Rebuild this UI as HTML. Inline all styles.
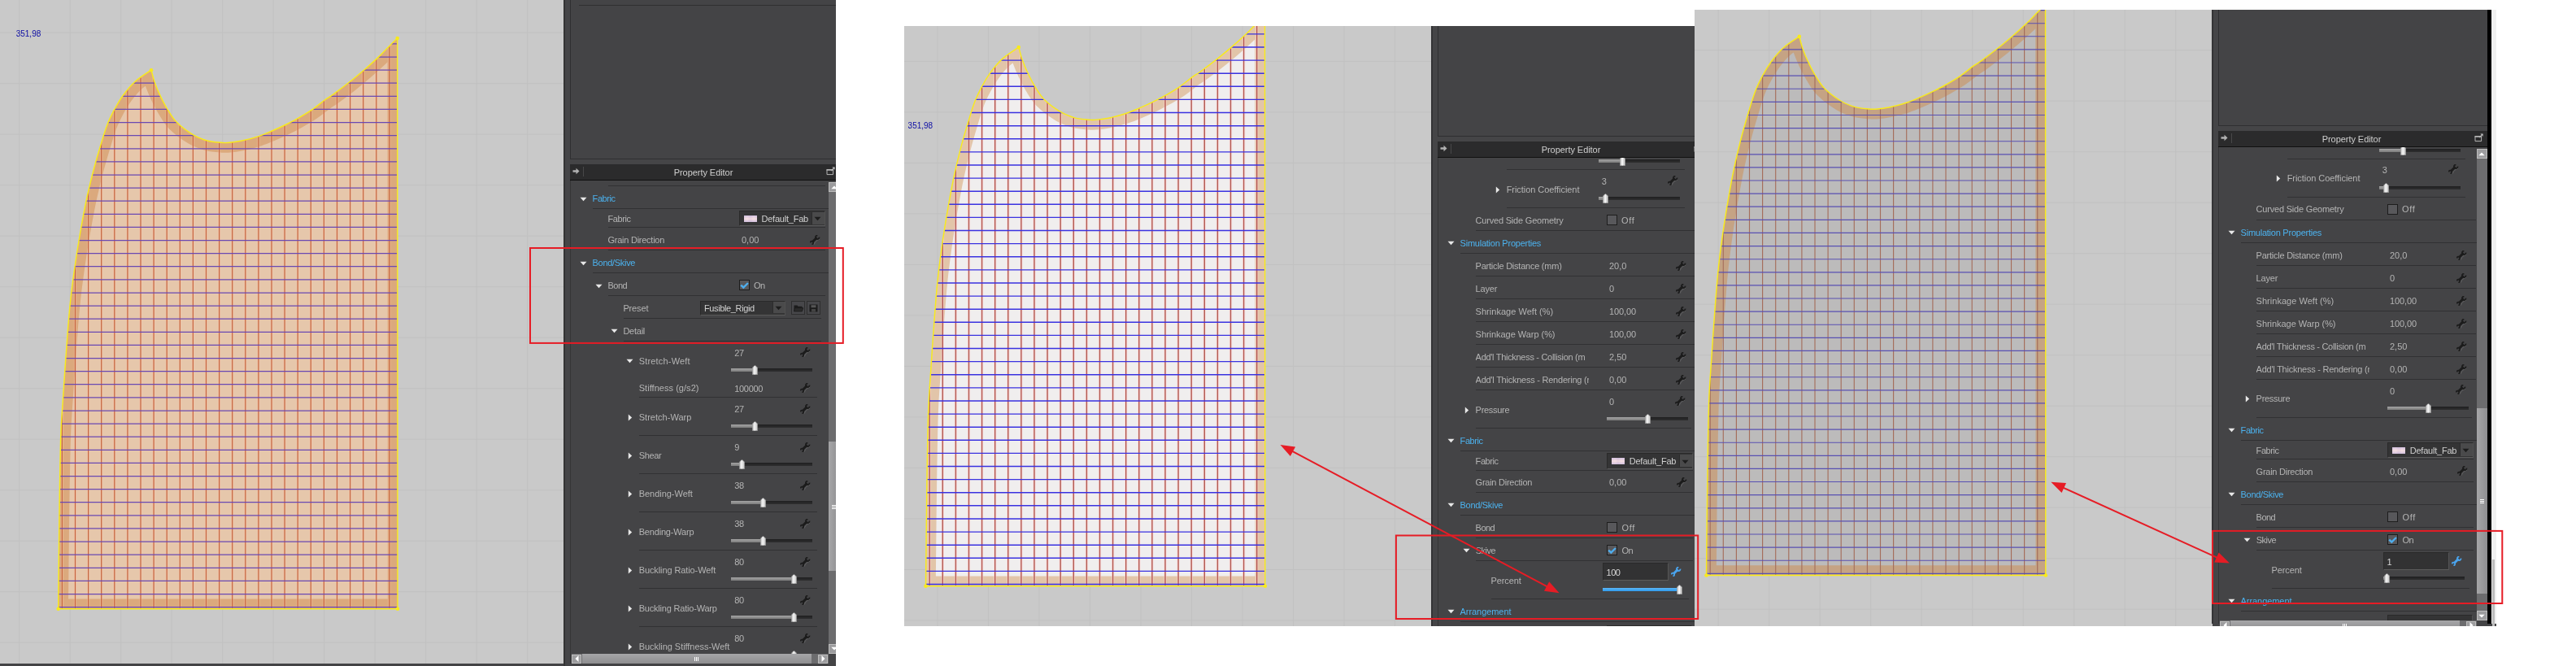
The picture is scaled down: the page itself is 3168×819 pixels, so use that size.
<!DOCTYPE html>
<html><head><meta charset="utf-8"><title>Property Editor</title>
<style>
html,body{margin:0;padding:0;background:#fff}
body{width:3168px;height:819px;position:relative;overflow:hidden;font-family:"Liberation Sans",sans-serif;font-size:11px}
.shot{position:absolute;overflow:hidden;will-change:transform}
.a,.t,.sep,.sepd,.sl,.slf,.slb,.cb,.dd,.ddb,.sw,.pside,.pbody,.pupper,.pgap,.ptitle,.vline,.vs,.vst,.vsa,.hs,.hst,.hsa,.btn,.inp,.grip,.griph,.fab{position:absolute}
.fab{left:0;top:0}
.t{color:#b4b4b4;font-size:11px;line-height:14px;height:14px;white-space:nowrap;letter-spacing:-0.1px}
.t.h{color:#4cb2ee}
.lbl{position:absolute;color:#0c0ca4;font-size:10px;line-height:12px;white-space:nowrap}
.sep{height:1px;background:#313133}
.sepd{height:1px;background:#303030}
.pside{background:#454547}
.pbody{background:#444446}
.pupper{background:#444446;border:1px solid #2f2f31;box-sizing:border-box}
.pgap{background:#454547}
.ptitle{background:#2b2b2c;border-bottom:1.5px solid #101010;box-sizing:border-box}
.vline{width:1px;background:#484849}
.sl{height:4px;background:linear-gradient(#1f1f20,#2f2f30)}
.slf{height:4px;background:linear-gradient(#a4a4a4,#7c7c7c)}
.slb{height:4px;background:linear-gradient(#5cb6f6,#2f9aec)}
.cb{width:13px;height:13px;background:#58585b;border:1.3px solid #1d1d1d;box-sizing:border-box}
.dd{background:#343435;border:1px solid #2a2a2a;border-bottom-color:#5a5a5a;border-right-color:#505050}
.ddb{background:#4a4a4b;border-left:1px solid #2c2c2c}
.sw{width:16px;height:8px;background:linear-gradient(180deg,rgba(196,178,222,.55),rgba(255,226,226,.6) 50%,rgba(196,178,222,.55)),linear-gradient(90deg,#d8c8dc,#ecdce2 25%,#d2c0d8 50%,#ecdce2 75%,#d8c8dc)}
.btn{width:17.5px;height:17.5px;background:#47474a;border:1px solid #2e2e2f;box-sizing:border-box}
.inp{width:81px;height:22px;background:#323233;border:1px solid #2a2a2a;border-bottom-color:#5c5c5c;border-right-color:#555;box-sizing:border-box}
.vs{background:#6c6c6e}
.vst{background:linear-gradient(90deg,#a6a6a8,#8e8e90)}
.vsa{background:#9c9c9e;border:1px solid #bdbdbd;box-sizing:border-box}
.hs{background:#6c6c6e}
.hst{background:linear-gradient(#a6a6a8,#8e8e90)}
.hsa{background:#9c9c9e;border:1px solid #bdbdbd;box-sizing:border-box}
.grip{width:5px;height:5px;background:repeating-linear-gradient(#fff 0 1px,transparent 1px 2px)}
.griph{width:5px;height:5px;background:repeating-linear-gradient(90deg,#fff 0 1px,transparent 1px 2px)}
</style></head><body>

<div class="shot" style="left:0;top:0;width:1028px;height:819px">
<div class="a" style="left:0px;top:0px;width:694px;height:816px;background:#c9c9c9"></div><svg class="a" style="left:0;top:0px" width="694" height="816"><path d="M23.7 0V816M86.2 0V816M148.7 0V816M211.2 0V816M273.7 0V816M336.2 0V816M398.7 0V816M461.2 0V816M523.7 0V816M586.2 0V816M648.7 0V816M0 40.2H694M0 102.7H694M0 165.2H694M0 227.7H694M0 290.2H694M0 352.7H694M0 415.2H694M0 477.7H694M0 540.2H694M0 602.7H694M0 665.2H694M0 727.7H694M0 790.2H694" stroke="#c1c1c1" stroke-width="1" fill="none"/></svg>
<svg class="fab" width="694" height="816" viewBox="0 0 694 816"><defs><clipPath id="c1"><path d="M71.7 748.8C71.8 737.3 72.2 702.5 72.4 680.0C72.7 657.5 72.8 638.2 73.2 614.0C73.6 589.8 74.1 555.7 74.8 535.0C75.5 514.3 76.4 507.2 77.5 490.0C78.6 472.8 80.1 450.5 81.5 431.5C82.9 412.5 84.3 392.9 86.0 376.0C87.7 359.1 89.6 344.8 91.7 330.0C93.8 315.2 96.1 300.8 98.5 287.0C100.9 273.2 103.4 259.3 106.0 247.0C108.6 234.7 111.2 224.0 114.0 213.0C116.8 202.0 120.0 191.0 123.0 181.0C126.0 171.0 129.0 160.8 132.0 153.0C135.0 145.2 137.8 140.0 141.0 134.0C144.2 128.0 147.2 122.8 151.5 117.0C155.8 111.2 161.2 104.6 167.0 99.5C172.8 94.4 182.8 88.4 186.0 86.2C186.8 88.9 188.7 96.9 190.6 102.2C192.5 107.5 194.7 112.7 197.2 117.9C199.7 123.1 202.2 128.2 205.5 133.6C208.8 138.9 211.6 144.6 217.0 150.0C222.4 155.4 231.2 161.9 237.7 165.8C244.2 169.7 250.0 171.6 255.8 173.2C261.6 174.8 268.3 174.9 272.3 175.3C276.3 175.7 276.0 175.8 280.0 175.5C284.0 175.2 290.2 174.6 296.5 173.3C302.8 172.0 311.7 169.7 318.0 167.6C324.3 165.5 329.0 163.3 334.5 161.0C340.0 158.7 345.6 156.1 351.0 153.5C356.4 150.9 361.3 148.3 366.6 145.3C371.9 142.3 377.4 139.2 383.0 135.4C388.6 131.6 395.7 125.6 400.0 122.5C404.3 119.4 404.1 120.2 409.0 116.6C413.9 113.0 423.1 106.1 429.6 101.0C436.1 95.9 441.7 91.2 447.8 86.0C453.9 80.8 460.8 74.5 466.0 69.6C471.2 64.7 475.2 60.2 479.0 56.4C482.8 52.6 487.1 48.6 488.7 47.0L489 748.8Z"/></clipPath></defs><g transform="translate(0.0 0.0)"><g clip-path="url(#c1)"><path d="M71.7 748.8C71.8 737.3 72.2 702.5 72.4 680.0C72.7 657.5 72.8 638.2 73.2 614.0C73.6 589.8 74.1 555.7 74.8 535.0C75.5 514.3 76.4 507.2 77.5 490.0C78.6 472.8 80.1 450.5 81.5 431.5C82.9 412.5 84.3 392.9 86.0 376.0C87.7 359.1 89.6 344.8 91.7 330.0C93.8 315.2 96.1 300.8 98.5 287.0C100.9 273.2 103.4 259.3 106.0 247.0C108.6 234.7 111.2 224.0 114.0 213.0C116.8 202.0 120.0 191.0 123.0 181.0C126.0 171.0 129.0 160.8 132.0 153.0C135.0 145.2 137.8 140.0 141.0 134.0C144.2 128.0 147.2 122.8 151.5 117.0C155.8 111.2 161.2 104.6 167.0 99.5C172.8 94.4 182.8 88.4 186.0 86.2C186.8 88.9 188.7 96.9 190.6 102.2C192.5 107.5 194.7 112.7 197.2 117.9C199.7 123.1 202.2 128.2 205.5 133.6C208.8 138.9 211.6 144.6 217.0 150.0C222.4 155.4 231.2 161.9 237.7 165.8C244.2 169.7 250.0 171.6 255.8 173.2C261.6 174.8 268.3 174.9 272.3 175.3C276.3 175.7 276.0 175.8 280.0 175.5C284.0 175.2 290.2 174.6 296.5 173.3C302.8 172.0 311.7 169.7 318.0 167.6C324.3 165.5 329.0 163.3 334.5 161.0C340.0 158.7 345.6 156.1 351.0 153.5C356.4 150.9 361.3 148.3 366.6 145.3C371.9 142.3 377.4 139.2 383.0 135.4C388.6 131.6 395.7 125.6 400.0 122.5C404.3 119.4 404.1 120.2 409.0 116.6C413.9 113.0 423.1 106.1 429.6 101.0C436.1 95.9 441.7 91.2 447.8 86.0C453.9 80.8 460.8 74.5 466.0 69.6C471.2 64.7 475.2 60.2 479.0 56.4C482.8 52.6 487.1 48.6 488.7 47.0L489 748.8Z" fill="#e6c7ab"/><path d="M71.7 748.8C71.8 737.3 72.2 702.5 72.4 680.0C72.7 657.5 72.8 638.2 73.2 614.0C73.6 589.8 74.1 555.7 74.8 535.0C75.5 514.3 76.4 507.2 77.5 490.0C78.6 472.8 80.1 450.5 81.5 431.5C82.9 412.5 84.3 392.9 86.0 376.0C87.7 359.1 89.6 344.8 91.7 330.0C93.8 315.2 96.1 300.8 98.5 287.0C100.9 273.2 103.4 259.3 106.0 247.0C108.6 234.7 111.2 224.0 114.0 213.0C116.8 202.0 120.0 191.0 123.0 181.0C126.0 171.0 129.0 160.8 132.0 153.0C135.0 145.2 137.8 140.0 141.0 134.0C144.2 128.0 147.2 122.8 151.5 117.0C155.8 111.2 161.2 104.6 167.0 99.5C172.8 94.4 182.8 88.4 186.0 86.2C186.8 88.9 188.7 96.9 190.6 102.2C192.5 107.5 194.7 112.7 197.2 117.9C199.7 123.1 202.2 128.2 205.5 133.6C208.8 138.9 211.6 144.6 217.0 150.0C222.4 155.4 231.2 161.9 237.7 165.8C244.2 169.7 250.0 171.6 255.8 173.2C261.6 174.8 268.3 174.9 272.3 175.3C276.3 175.7 276.0 175.8 280.0 175.5C284.0 175.2 290.2 174.6 296.5 173.3C302.8 172.0 311.7 169.7 318.0 167.6C324.3 165.5 329.0 163.3 334.5 161.0C340.0 158.7 345.6 156.1 351.0 153.5C356.4 150.9 361.3 148.3 366.6 145.3C371.9 142.3 377.4 139.2 383.0 135.4C388.6 131.6 395.7 125.6 400.0 122.5C404.3 119.4 404.1 120.2 409.0 116.6C413.9 113.0 423.1 106.1 429.6 101.0C436.1 95.9 441.7 91.2 447.8 86.0C453.9 80.8 460.8 74.5 466.0 69.6C471.2 64.7 475.2 60.2 479.0 56.4C482.8 52.6 487.1 48.6 488.7 47.0L489 748.8Z" fill="none" stroke="#dba97d" stroke-width="24.5" stroke-linejoin="miter"/><path d="M76.4 40V750M92.5 40V750M108.6 40V750M124.7 40V750M140.8 40V750M156.9 40V750M173.0 40V750M189.1 40V750M205.2 40V750M221.3 40V750M237.4 40V750M253.5 40V750M269.6 40V750M285.7 40V750M301.8 40V750M317.9 40V750M334.0 40V750M350.1 40V750M366.2 40V750M382.3 40V750M398.4 40V750M414.5 40V750M430.6 40V750M446.7 40V750M462.8 40V750M478.9 40V750" stroke="rgba(255,196,170,0.35)" stroke-width="3.4" fill="none"/><path d="M76.4 40V750M92.5 40V750M108.6 40V750M124.7 40V750M140.8 40V750M156.9 40V750M173.0 40V750M189.1 40V750M205.2 40V750M221.3 40V750M237.4 40V750M253.5 40V750M269.6 40V750M285.7 40V750M301.8 40V750M317.9 40V750M334.0 40V750M350.1 40V750M366.2 40V750M382.3 40V750M398.4 40V750M414.5 40V750M430.6 40V750M446.7 40V750M462.8 40V750M478.9 40V750" stroke="#c46640" stroke-width="1.25" fill="none"/><path d="M60 37.8H495M60 53.9H495M60 70.0H495M60 86.1H495M60 102.2H495M60 118.3H495M60 134.4H495M60 150.5H495M60 166.6H495M60 182.8H495M60 198.9H495M60 215.0H495M60 231.1H495M60 247.2H495M60 263.3H495M60 279.4H495M60 295.5H495M60 311.6H495M60 327.7H495M60 343.9H495M60 360.0H495M60 376.1H495M60 392.2H495M60 408.3H495M60 424.4H495M60 440.5H495M60 456.6H495M60 472.7H495M60 488.8H495M60 505.0H495M60 521.1H495M60 537.2H495M60 553.3H495M60 569.4H495M60 585.5H495M60 601.6H495M60 617.7H495M60 633.8H495M60 649.9H495M60 666.1H495M60 682.2H495M60 698.3H495M60 714.4H495M60 730.5H495M60 746.6H495" stroke="#6a49b2" stroke-width="1.25" fill="none"/></g><path d="M71.7 748.8C71.8 737.3 72.2 702.5 72.4 680.0C72.7 657.5 72.8 638.2 73.2 614.0C73.6 589.8 74.1 555.7 74.8 535.0C75.5 514.3 76.4 507.2 77.5 490.0C78.6 472.8 80.1 450.5 81.5 431.5C82.9 412.5 84.3 392.9 86.0 376.0C87.7 359.1 89.6 344.8 91.7 330.0C93.8 315.2 96.1 300.8 98.5 287.0C100.9 273.2 103.4 259.3 106.0 247.0C108.6 234.7 111.2 224.0 114.0 213.0C116.8 202.0 120.0 191.0 123.0 181.0C126.0 171.0 129.0 160.8 132.0 153.0C135.0 145.2 137.8 140.0 141.0 134.0C144.2 128.0 147.2 122.8 151.5 117.0C155.8 111.2 161.2 104.6 167.0 99.5C172.8 94.4 182.8 88.4 186.0 86.2C186.8 88.9 188.7 96.9 190.6 102.2C192.5 107.5 194.7 112.7 197.2 117.9C199.7 123.1 202.2 128.2 205.5 133.6C208.8 138.9 211.6 144.6 217.0 150.0C222.4 155.4 231.2 161.9 237.7 165.8C244.2 169.7 250.0 171.6 255.8 173.2C261.6 174.8 268.3 174.9 272.3 175.3C276.3 175.7 276.0 175.8 280.0 175.5C284.0 175.2 290.2 174.6 296.5 173.3C302.8 172.0 311.7 169.7 318.0 167.6C324.3 165.5 329.0 163.3 334.5 161.0C340.0 158.7 345.6 156.1 351.0 153.5C356.4 150.9 361.3 148.3 366.6 145.3C371.9 142.3 377.4 139.2 383.0 135.4C388.6 131.6 395.7 125.6 400.0 122.5C404.3 119.4 404.1 120.2 409.0 116.6C413.9 113.0 423.1 106.1 429.6 101.0C436.1 95.9 441.7 91.2 447.8 86.0C453.9 80.8 460.8 74.5 466.0 69.6C471.2 64.7 475.2 60.2 479.0 56.4C482.8 52.6 487.1 48.6 488.7 47.0L489 748.8Z" fill="none" stroke="#f8ea1c" stroke-width="1.45" stroke-linejoin="round"/><circle cx="186.0" cy="86.2" r="2.3" fill="#f8ea1c"/><circle cx="488.7" cy="47.0" r="2.3" fill="#f8ea1c"/><circle cx="71.7" cy="748.8" r="2.3" fill="#f8ea1c"/><circle cx="489.0" cy="748.8" r="2.3" fill="#f8ea1c"/></g></svg>
<div class="lbl" style="left:19.7px;top:35.7px">351,98</div>
<div class="pside" style="left:693.0px;top:0.0px;width:335.0px;height:819.0px"></div><div class="a" style="left:693.0px;top:0.0px;width:2px;height:819.0px;background:#343436"></div><div class="pbody" style="left:701.0px;top:0.0px;width:327.0px;height:819.0px"></div><div class="pupper" style="left:701.0px;top:-2.0px;width:329.0px;height:198.0px"></div><div class="pgap" style="left:701.0px;top:196.0px;width:327.0px;height:6.0px"></div><div class="a" style="left:701.0px;top:222.0px;width:1px;height:597.0px;background:#353536"></div><div class="ptitle" style="left:701.0px;top:202.0px;width:327.0px;height:20.0px"></div><div class="sepd" style="left:712px;top:6px;width:316px"></div><svg class="a" style="left:704.0px;top:206.0px" width="9" height="9" viewBox="0 0 9 9"><path d="M0.5 3.2H4.5V0.8L8.5 4.5L4.5 8.2V5.8H0.5Z" fill="#b0b0b0"/></svg><div class="vline" style="left:717px;top:205px;height:12px"></div><div class="t tc" style="left:0.0px;top:205.0px;left:781px;width:168px;text-align:center;color:#cfcfcf;letter-spacing:-0.05px">Property Editor</div><svg class="a" style="left:1015.6px;top:205.0px" width="12" height="11" viewBox="0 0 12 11"><path d="M1 3.6H8.6V9.6H1Z" fill="none" stroke="#b4b4b4" stroke-width="1"/><path d="M0.5 3.9H9.1" stroke="#b4b4b4" stroke-width="1.7"/><path d="M6 5.2L10 1.2" stroke="#b4b4b4" stroke-width="1.1"/><path d="M7.4 0.6H10.6V3.8Z" fill="#c4c4c4"/></svg><div class="sep" style="left:748.0px;top:228.0px;width:266.7px"></div><svg class="a" style="left:713.0px;top:241.5px" width="9" height="6" viewBox="0 0 9 6"><path d="M0.5 0.8H8.5L4.5 5.2Z" fill="#e8e8e8"/></svg><div class="t h" style="left:728.6px;top:237.0px;;letter-spacing:-0.41px">Fabric</div><div class="sep" style="left:729.0px;top:256.0px;width:290.0px"></div><div class="t" style="left:747.5px;top:261.5px;;letter-spacing:-0.41px">Fabric</div><div class="dd" style="left:909.0px;top:259.2px;width:103.7px;height:17.2px"></div><div class="ddb" style="left:998.2px;top:260.7px;width:14.5px;height:15.2px"></div><svg class="a" style="left:1001.2px;top:266.3px" width="9" height="6" viewBox="0 0 9 6"><path d="M0.5 0.8H8.5L4.5 5.2Z" fill="#1d1d1d"/></svg><div class="sw" style="left:915.0px;top:264.8px"></div><div class="t" style="left:936.5px;top:262.1px;color:#d0d0d0;letter-spacing:-0.22px">Default_Fab</div><div class="sep" style="left:748.0px;top:279.3px;width:266.7px"></div><div class="t" style="left:747.5px;top:287.5px;;letter-spacing:-0.25px">Grain Direction</div><div class="t" style="left:912.0px;top:288.0px;;letter-spacing:-0.00px">0,00</div><svg class="a" style="left:995.5px;top:288.5px" width="13" height="13" viewBox="0 0 13 13"><path d="M5.2 11.6L6.3 8.9L9.2 6.3L12 5.2" stroke="#666668" stroke-width="0.9" fill="none"/><path d="M3 8.7L8.6 3.1" stroke="#1c1c1c" stroke-width="2.9" fill="none"/><path d="M11.5 2.6A2.3 2.3 0 1 1 9.4 0.5" stroke="#1c1c1c" stroke-width="1.8" fill="none"/><path d="M0.6 9.4A1.8 1.8 0 1 1 2.4 11.2" stroke="#1c1c1c" stroke-width="1.6" fill="none"/></svg><div class="sep" style="left:748.0px;top:307.0px;width:266.7px"></div><svg class="a" style="left:713.0px;top:320.5px" width="9" height="6" viewBox="0 0 9 6"><path d="M0.5 0.8H8.5L4.5 5.2Z" fill="#e8e8e8"/></svg><div class="t h" style="left:728.6px;top:316.0px;;letter-spacing:-0.31px">Bond/Skive</div><div class="sep" style="left:729.0px;top:335.0px;width:290.0px"></div><svg class="a" style="left:731.5px;top:348.5px" width="9" height="6" viewBox="0 0 9 6"><path d="M0.5 0.8H8.5L4.5 5.2Z" fill="#e8e8e8"/></svg><div class="t" style="left:747.5px;top:344.0px;;letter-spacing:-0.52px">Bond</div><div class="cb" style="left:909.2px;top:344.2px"></div><svg class="a" style="left:909.2px;top:344.2px" width="13" height="13" viewBox="0 0 13 13"><path d="M2.2 6.6L5.3 9.5L10.9 4" stroke="#4eaeee" stroke-width="2.4" fill="none"/></svg><div class="t" style="left:927.0px;top:344.0px;;letter-spacing:-0.54px">On</div><div class="sep" style="left:748.0px;top:363.0px;width:266.7px"></div><div class="t" style="left:766.4px;top:372.0px;;letter-spacing:-0.15px">Preset</div><div class="dd" style="left:861.0px;top:369.5px;width:103.0px;height:16.3px"></div><div class="ddb" style="left:949.5px;top:371.0px;width:14.5px;height:14.3px"></div><svg class="a" style="left:952.5px;top:376.1px" width="9" height="6" viewBox="0 0 9 6"><path d="M0.5 0.8H8.5L4.5 5.2Z" fill="#1d1d1d"/></svg><div class="t" style="left:866.0px;top:371.9px;color:#d0d0d0;letter-spacing:-0.37px">Fusible_Rigid</div><div class="btn" style="left:972.5px;top:369.5px"></div><svg class="a" style="left:975.5px;top:373.5px" width="12" height="10" viewBox="0 0 12 10"><path d="M0.5 1.5H4.5L5.5 2.8H10.5V9H0.5Z" fill="#1c1c1c"/><path d="M1.5 4.6H11.8L10.3 9H0.5Z" fill="#2a2a2a" stroke="#1c1c1c" stroke-width=".8"/></svg><div class="btn" style="left:991.5px;top:369.5px"></div><svg class="a" style="left:995.0px;top:373.5px" width="11" height="10" viewBox="0 0 11 10"><path d="M0.5 0.5H10.5V9.5H0.5Z" fill="#1c1c1c"/><path d="M2.5 1.2H8.5V4.2H2.5Z" fill="#555"/><path d="M3 6H8V9.5H3Z" fill="#444"/></svg><div class="sep" style="left:767.0px;top:391.0px;width:243.0px"></div><svg class="a" style="left:750.5px;top:404.0px" width="9" height="6" viewBox="0 0 9 6"><path d="M0.5 0.8H8.5L4.5 5.2Z" fill="#e8e8e8"/></svg><div class="t" style="left:766.4px;top:399.7px;;letter-spacing:-0.25px">Detail</div><div class="sep" style="left:767.0px;top:419.0px;width:243.0px"></div><svg class="a" style="left:770.0px;top:441.1px" width="9" height="6" viewBox="0 0 9 6"><path d="M0.5 0.8H8.5L4.5 5.2Z" fill="#e8e8e8"/></svg><div class="t" style="left:785.7px;top:436.6px;;letter-spacing:0.18px">Stretch-Weft</div><div class="t" style="left:903.3px;top:426.8px;;letter-spacing:-0.32px">27</div><svg class="a" style="left:983.5px;top:427.1px" width="13" height="13" viewBox="0 0 13 13"><path d="M5.2 11.6L6.3 8.9L9.2 6.3L12 5.2" stroke="#666668" stroke-width="0.9" fill="none"/><path d="M3 8.7L8.6 3.1" stroke="#1c1c1c" stroke-width="2.9" fill="none"/><path d="M11.5 2.6A2.3 2.3 0 1 1 9.4 0.5" stroke="#1c1c1c" stroke-width="1.8" fill="none"/><path d="M0.6 9.4A1.8 1.8 0 1 1 2.4 11.2" stroke="#1c1c1c" stroke-width="1.6" fill="none"/></svg><div class="sl" style="left:899.0px;top:452.6px;width:100.0px"></div><div class="slf" style="left:899.0px;top:452.6px;width:29.0px"></div><svg class="a" style="left:924.5px;top:448.6px" width="7" height="12" viewBox="0 0 7 12"><path d="M3.5 0.3L6.6 3V11.7H0.4V3Z" fill="#d4d4d4" stroke="#8a8a8a" stroke-width=".6"/><path d="M3.3 1.2V11.4" stroke="#f6f6f6" stroke-width="1.6"/></svg><div class="t" style="left:785.7px;top:470.4px;;letter-spacing:0.04px">Stiffness (g/s2)</div><div class="t" style="left:903.3px;top:471.0px;;letter-spacing:-0.33px">100000</div><svg class="a" style="left:983.5px;top:470.5px" width="13" height="13" viewBox="0 0 13 13"><path d="M5.2 11.6L6.3 8.9L9.2 6.3L12 5.2" stroke="#666668" stroke-width="0.9" fill="none"/><path d="M3 8.7L8.6 3.1" stroke="#1c1c1c" stroke-width="2.9" fill="none"/><path d="M11.5 2.6A2.3 2.3 0 1 1 9.4 0.5" stroke="#1c1c1c" stroke-width="1.8" fill="none"/><path d="M0.6 9.4A1.8 1.8 0 1 1 2.4 11.2" stroke="#1c1c1c" stroke-width="1.6" fill="none"/></svg><div class="sep" style="left:786.0px;top:488.0px;width:219.0px"></div><svg class="a" style="left:771.5px;top:508.8px" width="6" height="9" viewBox="0 0 6 9"><path d="M0.8 0.5V8.5L5.2 4.5Z" fill="#e8e8e8"/></svg><div class="t" style="left:785.7px;top:506.0px;;letter-spacing:0.03px">Stretch-Warp</div><div class="t" style="left:903.3px;top:496.2px;;letter-spacing:-0.32px">27</div><svg class="a" style="left:983.5px;top:496.5px" width="13" height="13" viewBox="0 0 13 13"><path d="M5.2 11.6L6.3 8.9L9.2 6.3L12 5.2" stroke="#666668" stroke-width="0.9" fill="none"/><path d="M3 8.7L8.6 3.1" stroke="#1c1c1c" stroke-width="2.9" fill="none"/><path d="M11.5 2.6A2.3 2.3 0 1 1 9.4 0.5" stroke="#1c1c1c" stroke-width="1.8" fill="none"/><path d="M0.6 9.4A1.8 1.8 0 1 1 2.4 11.2" stroke="#1c1c1c" stroke-width="1.6" fill="none"/></svg><div class="sl" style="left:899.0px;top:522.0px;width:100.0px"></div><div class="slf" style="left:899.0px;top:522.0px;width:29.0px"></div><svg class="a" style="left:924.5px;top:518.0px" width="7" height="12" viewBox="0 0 7 12"><path d="M3.5 0.3L6.6 3V11.7H0.4V3Z" fill="#d4d4d4" stroke="#8a8a8a" stroke-width=".6"/><path d="M3.3 1.2V11.4" stroke="#f6f6f6" stroke-width="1.6"/></svg><div class="sep" style="left:786.0px;top:535.3px;width:219.0px"></div><svg class="a" style="left:771.5px;top:555.8px" width="6" height="9" viewBox="0 0 6 9"><path d="M0.8 0.5V8.5L5.2 4.5Z" fill="#e8e8e8"/></svg><div class="t" style="left:785.7px;top:553.0px;;letter-spacing:-0.37px">Shear</div><div class="t" style="left:903.3px;top:543.2px;">9</div><svg class="a" style="left:983.5px;top:543.5px" width="13" height="13" viewBox="0 0 13 13"><path d="M5.2 11.6L6.3 8.9L9.2 6.3L12 5.2" stroke="#666668" stroke-width="0.9" fill="none"/><path d="M3 8.7L8.6 3.1" stroke="#1c1c1c" stroke-width="2.9" fill="none"/><path d="M11.5 2.6A2.3 2.3 0 1 1 9.4 0.5" stroke="#1c1c1c" stroke-width="1.8" fill="none"/><path d="M0.6 9.4A1.8 1.8 0 1 1 2.4 11.2" stroke="#1c1c1c" stroke-width="1.6" fill="none"/></svg><div class="sl" style="left:899.0px;top:569.0px;width:100.0px"></div><div class="slf" style="left:899.0px;top:569.0px;width:13.0px"></div><svg class="a" style="left:908.5px;top:565.0px" width="7" height="12" viewBox="0 0 7 12"><path d="M3.5 0.3L6.6 3V11.7H0.4V3Z" fill="#d4d4d4" stroke="#8a8a8a" stroke-width=".6"/><path d="M3.3 1.2V11.4" stroke="#f6f6f6" stroke-width="1.6"/></svg><div class="sep" style="left:786.0px;top:582.3px;width:219.0px"></div><svg class="a" style="left:771.5px;top:602.8px" width="6" height="9" viewBox="0 0 6 9"><path d="M0.8 0.5V8.5L5.2 4.5Z" fill="#e8e8e8"/></svg><div class="t" style="left:785.7px;top:600.0px;;letter-spacing:-0.03px">Bending-Weft</div><div class="t" style="left:903.3px;top:590.2px;;letter-spacing:-0.32px">38</div><svg class="a" style="left:983.5px;top:590.5px" width="13" height="13" viewBox="0 0 13 13"><path d="M5.2 11.6L6.3 8.9L9.2 6.3L12 5.2" stroke="#666668" stroke-width="0.9" fill="none"/><path d="M3 8.7L8.6 3.1" stroke="#1c1c1c" stroke-width="2.9" fill="none"/><path d="M11.5 2.6A2.3 2.3 0 1 1 9.4 0.5" stroke="#1c1c1c" stroke-width="1.8" fill="none"/><path d="M0.6 9.4A1.8 1.8 0 1 1 2.4 11.2" stroke="#1c1c1c" stroke-width="1.6" fill="none"/></svg><div class="sl" style="left:899.0px;top:616.0px;width:100.0px"></div><div class="slf" style="left:899.0px;top:616.0px;width:39.0px"></div><svg class="a" style="left:934.5px;top:612.0px" width="7" height="12" viewBox="0 0 7 12"><path d="M3.5 0.3L6.6 3V11.7H0.4V3Z" fill="#d4d4d4" stroke="#8a8a8a" stroke-width=".6"/><path d="M3.3 1.2V11.4" stroke="#f6f6f6" stroke-width="1.6"/></svg><div class="sep" style="left:786.0px;top:629.3px;width:219.0px"></div><svg class="a" style="left:771.5px;top:649.8px" width="6" height="9" viewBox="0 0 6 9"><path d="M0.8 0.5V8.5L5.2 4.5Z" fill="#e8e8e8"/></svg><div class="t" style="left:785.7px;top:647.0px;;letter-spacing:-0.18px">Bending-Warp</div><div class="t" style="left:903.3px;top:637.2px;;letter-spacing:-0.32px">38</div><svg class="a" style="left:983.5px;top:637.5px" width="13" height="13" viewBox="0 0 13 13"><path d="M5.2 11.6L6.3 8.9L9.2 6.3L12 5.2" stroke="#666668" stroke-width="0.9" fill="none"/><path d="M3 8.7L8.6 3.1" stroke="#1c1c1c" stroke-width="2.9" fill="none"/><path d="M11.5 2.6A2.3 2.3 0 1 1 9.4 0.5" stroke="#1c1c1c" stroke-width="1.8" fill="none"/><path d="M0.6 9.4A1.8 1.8 0 1 1 2.4 11.2" stroke="#1c1c1c" stroke-width="1.6" fill="none"/></svg><div class="sl" style="left:899.0px;top:663.0px;width:100.0px"></div><div class="slf" style="left:899.0px;top:663.0px;width:39.0px"></div><svg class="a" style="left:934.5px;top:659.0px" width="7" height="12" viewBox="0 0 7 12"><path d="M3.5 0.3L6.6 3V11.7H0.4V3Z" fill="#d4d4d4" stroke="#8a8a8a" stroke-width=".6"/><path d="M3.3 1.2V11.4" stroke="#f6f6f6" stroke-width="1.6"/></svg><div class="sep" style="left:786.0px;top:676.3px;width:219.0px"></div><svg class="a" style="left:771.5px;top:696.8px" width="6" height="9" viewBox="0 0 6 9"><path d="M0.8 0.5V8.5L5.2 4.5Z" fill="#e8e8e8"/></svg><div class="t" style="left:785.7px;top:694.0px;;letter-spacing:-0.10px">Buckling Ratio-Weft</div><div class="t" style="left:903.3px;top:684.2px;;letter-spacing:-0.32px">80</div><svg class="a" style="left:983.5px;top:684.5px" width="13" height="13" viewBox="0 0 13 13"><path d="M5.2 11.6L6.3 8.9L9.2 6.3L12 5.2" stroke="#666668" stroke-width="0.9" fill="none"/><path d="M3 8.7L8.6 3.1" stroke="#1c1c1c" stroke-width="2.9" fill="none"/><path d="M11.5 2.6A2.3 2.3 0 1 1 9.4 0.5" stroke="#1c1c1c" stroke-width="1.8" fill="none"/><path d="M0.6 9.4A1.8 1.8 0 1 1 2.4 11.2" stroke="#1c1c1c" stroke-width="1.6" fill="none"/></svg><div class="sl" style="left:899.0px;top:710.0px;width:100.0px"></div><div class="slf" style="left:899.0px;top:710.0px;width:77.5px"></div><svg class="a" style="left:973.0px;top:706.0px" width="7" height="12" viewBox="0 0 7 12"><path d="M3.5 0.3L6.6 3V11.7H0.4V3Z" fill="#d4d4d4" stroke="#8a8a8a" stroke-width=".6"/><path d="M3.3 1.2V11.4" stroke="#f6f6f6" stroke-width="1.6"/></svg><div class="sep" style="left:786.0px;top:723.3px;width:219.0px"></div><svg class="a" style="left:771.5px;top:743.8px" width="6" height="9" viewBox="0 0 6 9"><path d="M0.8 0.5V8.5L5.2 4.5Z" fill="#e8e8e8"/></svg><div class="t" style="left:785.7px;top:741.0px;;letter-spacing:-0.20px">Buckling Ratio-Warp</div><div class="t" style="left:903.3px;top:731.2px;;letter-spacing:-0.32px">80</div><svg class="a" style="left:983.5px;top:731.5px" width="13" height="13" viewBox="0 0 13 13"><path d="M5.2 11.6L6.3 8.9L9.2 6.3L12 5.2" stroke="#666668" stroke-width="0.9" fill="none"/><path d="M3 8.7L8.6 3.1" stroke="#1c1c1c" stroke-width="2.9" fill="none"/><path d="M11.5 2.6A2.3 2.3 0 1 1 9.4 0.5" stroke="#1c1c1c" stroke-width="1.8" fill="none"/><path d="M0.6 9.4A1.8 1.8 0 1 1 2.4 11.2" stroke="#1c1c1c" stroke-width="1.6" fill="none"/></svg><div class="sl" style="left:899.0px;top:757.0px;width:100.0px"></div><div class="slf" style="left:899.0px;top:757.0px;width:77.5px"></div><svg class="a" style="left:973.0px;top:753.0px" width="7" height="12" viewBox="0 0 7 12"><path d="M3.5 0.3L6.6 3V11.7H0.4V3Z" fill="#d4d4d4" stroke="#8a8a8a" stroke-width=".6"/><path d="M3.3 1.2V11.4" stroke="#f6f6f6" stroke-width="1.6"/></svg><div class="sep" style="left:786.0px;top:770.3px;width:219.0px"></div><svg class="a" style="left:771.5px;top:790.8px" width="6" height="9" viewBox="0 0 6 9"><path d="M0.8 0.5V8.5L5.2 4.5Z" fill="#e8e8e8"/></svg><div class="t" style="left:785.7px;top:788.0px;;letter-spacing:-0.05px">Buckling Stiffness-Weft</div><div class="t" style="left:903.3px;top:778.2px;;letter-spacing:-0.32px">80</div><svg class="a" style="left:983.5px;top:778.5px" width="13" height="13" viewBox="0 0 13 13"><path d="M5.2 11.6L6.3 8.9L9.2 6.3L12 5.2" stroke="#666668" stroke-width="0.9" fill="none"/><path d="M3 8.7L8.6 3.1" stroke="#1c1c1c" stroke-width="2.9" fill="none"/><path d="M11.5 2.6A2.3 2.3 0 1 1 9.4 0.5" stroke="#1c1c1c" stroke-width="1.8" fill="none"/><path d="M0.6 9.4A1.8 1.8 0 1 1 2.4 11.2" stroke="#1c1c1c" stroke-width="1.6" fill="none"/></svg><div class="sl" style="left:899.0px;top:804.0px;width:100.0px"></div><div class="slf" style="left:899.0px;top:804.0px;width:77.5px"></div><svg class="a" style="left:973.0px;top:800.0px" width="7" height="12" viewBox="0 0 7 12"><path d="M3.5 0.3L6.6 3V11.7H0.4V3Z" fill="#d4d4d4" stroke="#8a8a8a" stroke-width=".6"/><path d="M3.3 1.2V11.4" stroke="#f6f6f6" stroke-width="1.6"/></svg><div class="sep" style="left:786.0px;top:817.3px;width:219.0px"></div><div class="pbody" style="left:701.5px;top:803.5px;width:326.5px;height:16px"></div><div class="vs" style="left:1019.2px;top:224.0px;width:12.7px;height:579.5px"></div><div class="vst" style="left:1019.2px;top:543.0px;width:12.7px;height:158.5px"></div><div class="vsa" style="left:1019.2px;top:224.0px;width:12.7px;height:12.0px"></div><svg class="a" style="left:1021.6px;top:228.0px" width="8" height="5" viewBox="0 0 8 5"><path d="M0.3 4.3L4 0.6L7.7 4.3Z" fill="#fff"/></svg><div class="vsa" style="left:1019.2px;top:791.5px;width:12.7px;height:12.0px"></div><svg class="a" style="left:1021.6px;top:795.0px" width="8" height="5" viewBox="0 0 8 5"><path d="M0.3 0.7L4 4.4L7.7 0.7Z" fill="#fff"/></svg><div class="grip" style="left:1023.1px;top:620.5px"></div><div class="hs" style="left:702.5px;top:804.0px;width:316.2px;height:12.0px"></div><div class="hst" style="left:716.0px;top:804.0px;width:282.0px;height:12.0px"></div><div class="hsa" style="left:703.0px;top:804.5px;width:12.0px;height:11.0px"></div><svg class="a" style="left:706.5px;top:806.0px" width="5" height="8" viewBox="0 0 5 8"><path d="M4.5 0L0.5 4L4.5 8Z" fill="#fff"/></svg><div class="hsa" style="left:1006.2px;top:804.5px;width:12.0px;height:11.0px"></div><svg class="a" style="left:1010.2px;top:806.0px" width="5" height="8" viewBox="0 0 5 8"><path d="M0.5 0L4.5 4L0.5 8Z" fill="#fff"/></svg><div class="griph" style="left:854.0px;top:807.5px"></div><div class="a" style="left:0;top:816px;width:1028px;height:3px;background:#434345"></div><div class="a" style="left:693px;top:0;width:2px;height:819px;background:#343434"></div>
</div>
<div class="shot" style="left:1112px;top:32px;width:990px;height:738px">
<div class="a" style="left:-1112px;top:-32px;width:3168px;height:819px">
<div class="a" style="left:1112px;top:32px;width:650px;height:738px;background:#c9c9c9"></div><svg class="a" style="left:0;top:32px" width="1762" height="738"><path d="M1153.0 0V738M1215.5 0V738M1278.0 0V738M1340.5 0V738M1403.0 0V738M1465.5 0V738M1528.0 0V738M1590.5 0V738M1653.0 0V738M1715.5 0V738M1112 43.4H1762M1112 105.9H1762M1112 168.4H1762M1112 230.9H1762M1112 293.4H1762M1112 355.9H1762M1112 418.4H1762M1112 480.9H1762M1112 543.4H1762M1112 605.9H1762M1112 668.4H1762M1112 730.9H1762" stroke="#c1c1c1" stroke-width="1" fill="none"/></svg>
</div>
<div class="a" style="left:0;top:0;width:650px;height:738px;overflow:hidden"><div class="a" style="left:-1112px;top:-32px">
<svg class="fab" width="1762" height="770" viewBox="0 0 1762 770"><defs><clipPath id="c2"><path d="M71.7 748.8C71.8 737.3 72.2 702.5 72.4 680.0C72.7 657.5 72.8 638.2 73.2 614.0C73.6 589.8 74.1 555.7 74.8 535.0C75.5 514.3 76.4 507.2 77.5 490.0C78.6 472.8 80.1 450.5 81.5 431.5C82.9 412.5 84.3 392.9 86.0 376.0C87.7 359.1 89.6 344.8 91.7 330.0C93.8 315.2 96.1 300.8 98.5 287.0C100.9 273.2 103.4 259.3 106.0 247.0C108.6 234.7 111.2 224.0 114.0 213.0C116.8 202.0 120.0 191.0 123.0 181.0C126.0 171.0 129.0 160.8 132.0 153.0C135.0 145.2 137.8 140.0 141.0 134.0C144.2 128.0 147.2 122.8 151.5 117.0C155.8 111.2 161.2 104.6 167.0 99.5C172.8 94.4 182.8 88.4 186.0 86.2C186.8 88.9 188.7 96.9 190.6 102.2C192.5 107.5 194.7 112.7 197.2 117.9C199.7 123.1 202.2 128.2 205.5 133.6C208.8 138.9 211.6 144.6 217.0 150.0C222.4 155.4 231.2 161.9 237.7 165.8C244.2 169.7 250.0 171.6 255.8 173.2C261.6 174.8 268.3 174.9 272.3 175.3C276.3 175.7 276.0 175.8 280.0 175.5C284.0 175.2 290.2 174.6 296.5 173.3C302.8 172.0 311.7 169.7 318.0 167.6C324.3 165.5 329.0 163.3 334.5 161.0C340.0 158.7 345.6 156.1 351.0 153.5C356.4 150.9 361.3 148.3 366.6 145.3C371.9 142.3 377.4 139.2 383.0 135.4C388.6 131.6 395.7 125.6 400.0 122.5C404.3 119.4 404.1 120.2 409.0 116.6C413.9 113.0 423.1 106.1 429.6 101.0C436.1 95.9 441.7 91.2 447.8 86.0C453.9 80.8 460.8 74.5 466.0 69.6C471.2 64.7 475.2 60.2 479.0 56.4C482.8 52.6 487.1 48.6 488.7 47.0L489 748.8Z"/></clipPath></defs><g transform="translate(1066.8 -28.1)"><g clip-path="url(#c2)"><path d="M71.7 748.8C71.8 737.3 72.2 702.5 72.4 680.0C72.7 657.5 72.8 638.2 73.2 614.0C73.6 589.8 74.1 555.7 74.8 535.0C75.5 514.3 76.4 507.2 77.5 490.0C78.6 472.8 80.1 450.5 81.5 431.5C82.9 412.5 84.3 392.9 86.0 376.0C87.7 359.1 89.6 344.8 91.7 330.0C93.8 315.2 96.1 300.8 98.5 287.0C100.9 273.2 103.4 259.3 106.0 247.0C108.6 234.7 111.2 224.0 114.0 213.0C116.8 202.0 120.0 191.0 123.0 181.0C126.0 171.0 129.0 160.8 132.0 153.0C135.0 145.2 137.8 140.0 141.0 134.0C144.2 128.0 147.2 122.8 151.5 117.0C155.8 111.2 161.2 104.6 167.0 99.5C172.8 94.4 182.8 88.4 186.0 86.2C186.8 88.9 188.7 96.9 190.6 102.2C192.5 107.5 194.7 112.7 197.2 117.9C199.7 123.1 202.2 128.2 205.5 133.6C208.8 138.9 211.6 144.6 217.0 150.0C222.4 155.4 231.2 161.9 237.7 165.8C244.2 169.7 250.0 171.6 255.8 173.2C261.6 174.8 268.3 174.9 272.3 175.3C276.3 175.7 276.0 175.8 280.0 175.5C284.0 175.2 290.2 174.6 296.5 173.3C302.8 172.0 311.7 169.7 318.0 167.6C324.3 165.5 329.0 163.3 334.5 161.0C340.0 158.7 345.6 156.1 351.0 153.5C356.4 150.9 361.3 148.3 366.6 145.3C371.9 142.3 377.4 139.2 383.0 135.4C388.6 131.6 395.7 125.6 400.0 122.5C404.3 119.4 404.1 120.2 409.0 116.6C413.9 113.0 423.1 106.1 429.6 101.0C436.1 95.9 441.7 91.2 447.8 86.0C453.9 80.8 460.8 74.5 466.0 69.6C471.2 64.7 475.2 60.2 479.0 56.4C482.8 52.6 487.1 48.6 488.7 47.0L489 748.8Z" fill="#f0eeee"/><path d="M71.7 748.8C71.8 737.3 72.2 702.5 72.4 680.0C72.7 657.5 72.8 638.2 73.2 614.0C73.6 589.8 74.1 555.7 74.8 535.0C75.5 514.3 76.4 507.2 77.5 490.0C78.6 472.8 80.1 450.5 81.5 431.5C82.9 412.5 84.3 392.9 86.0 376.0C87.7 359.1 89.6 344.8 91.7 330.0C93.8 315.2 96.1 300.8 98.5 287.0C100.9 273.2 103.4 259.3 106.0 247.0C108.6 234.7 111.2 224.0 114.0 213.0C116.8 202.0 120.0 191.0 123.0 181.0C126.0 171.0 129.0 160.8 132.0 153.0C135.0 145.2 137.8 140.0 141.0 134.0C144.2 128.0 147.2 122.8 151.5 117.0C155.8 111.2 161.2 104.6 167.0 99.5C172.8 94.4 182.8 88.4 186.0 86.2C186.8 88.9 188.7 96.9 190.6 102.2C192.5 107.5 194.7 112.7 197.2 117.9C199.7 123.1 202.2 128.2 205.5 133.6C208.8 138.9 211.6 144.6 217.0 150.0C222.4 155.4 231.2 161.9 237.7 165.8C244.2 169.7 250.0 171.6 255.8 173.2C261.6 174.8 268.3 174.9 272.3 175.3C276.3 175.7 276.0 175.8 280.0 175.5C284.0 175.2 290.2 174.6 296.5 173.3C302.8 172.0 311.7 169.7 318.0 167.6C324.3 165.5 329.0 163.3 334.5 161.0C340.0 158.7 345.6 156.1 351.0 153.5C356.4 150.9 361.3 148.3 366.6 145.3C371.9 142.3 377.4 139.2 383.0 135.4C388.6 131.6 395.7 125.6 400.0 122.5C404.3 119.4 404.1 120.2 409.0 116.6C413.9 113.0 423.1 106.1 429.6 101.0C436.1 95.9 441.7 91.2 447.8 86.0C453.9 80.8 460.8 74.5 466.0 69.6C471.2 64.7 475.2 60.2 479.0 56.4C482.8 52.6 487.1 48.6 488.7 47.0L489 748.8Z" fill="none" stroke="#e2c5a9" stroke-width="24.5" stroke-linejoin="miter"/><path d="M76.4 40V750M92.5 40V750M108.6 40V750M124.7 40V750M140.8 40V750M156.9 40V750M173.0 40V750M189.1 40V750M205.2 40V750M221.3 40V750M237.4 40V750M253.5 40V750M269.6 40V750M285.7 40V750M301.8 40V750M317.9 40V750M334.0 40V750M350.1 40V750M366.2 40V750M382.3 40V750M398.4 40V750M414.5 40V750M430.6 40V750M446.7 40V750M462.8 40V750M478.9 40V750" stroke="rgba(255,205,205,0.55)" stroke-width="3.4" fill="none"/><path d="M76.4 40V750M92.5 40V750M108.6 40V750M124.7 40V750M140.8 40V750M156.9 40V750M173.0 40V750M189.1 40V750M205.2 40V750M221.3 40V750M237.4 40V750M253.5 40V750M269.6 40V750M285.7 40V750M301.8 40V750M317.9 40V750M334.0 40V750M350.1 40V750M366.2 40V750M382.3 40V750M398.4 40V750M414.5 40V750M430.6 40V750M446.7 40V750M462.8 40V750M478.9 40V750" stroke="#b25a52" stroke-width="1.40" fill="none"/><path d="M60 37.8H495M60 53.9H495M60 70.0H495M60 86.1H495M60 102.2H495M60 118.3H495M60 134.4H495M60 150.5H495M60 166.6H495M60 182.8H495M60 198.9H495M60 215.0H495M60 231.1H495M60 247.2H495M60 263.3H495M60 279.4H495M60 295.5H495M60 311.6H495M60 327.7H495M60 343.9H495M60 360.0H495M60 376.1H495M60 392.2H495M60 408.3H495M60 424.4H495M60 440.5H495M60 456.6H495M60 472.7H495M60 488.8H495M60 505.0H495M60 521.1H495M60 537.2H495M60 553.3H495M60 569.4H495M60 585.5H495M60 601.6H495M60 617.7H495M60 633.8H495M60 649.9H495M60 666.1H495M60 682.2H495M60 698.3H495M60 714.4H495M60 730.5H495M60 746.6H495" stroke="#3a32e0" stroke-width="1.40" fill="none"/></g><path d="M71.7 748.8C71.8 737.3 72.2 702.5 72.4 680.0C72.7 657.5 72.8 638.2 73.2 614.0C73.6 589.8 74.1 555.7 74.8 535.0C75.5 514.3 76.4 507.2 77.5 490.0C78.6 472.8 80.1 450.5 81.5 431.5C82.9 412.5 84.3 392.9 86.0 376.0C87.7 359.1 89.6 344.8 91.7 330.0C93.8 315.2 96.1 300.8 98.5 287.0C100.9 273.2 103.4 259.3 106.0 247.0C108.6 234.7 111.2 224.0 114.0 213.0C116.8 202.0 120.0 191.0 123.0 181.0C126.0 171.0 129.0 160.8 132.0 153.0C135.0 145.2 137.8 140.0 141.0 134.0C144.2 128.0 147.2 122.8 151.5 117.0C155.8 111.2 161.2 104.6 167.0 99.5C172.8 94.4 182.8 88.4 186.0 86.2C186.8 88.9 188.7 96.9 190.6 102.2C192.5 107.5 194.7 112.7 197.2 117.9C199.7 123.1 202.2 128.2 205.5 133.6C208.8 138.9 211.6 144.6 217.0 150.0C222.4 155.4 231.2 161.9 237.7 165.8C244.2 169.7 250.0 171.6 255.8 173.2C261.6 174.8 268.3 174.9 272.3 175.3C276.3 175.7 276.0 175.8 280.0 175.5C284.0 175.2 290.2 174.6 296.5 173.3C302.8 172.0 311.7 169.7 318.0 167.6C324.3 165.5 329.0 163.3 334.5 161.0C340.0 158.7 345.6 156.1 351.0 153.5C356.4 150.9 361.3 148.3 366.6 145.3C371.9 142.3 377.4 139.2 383.0 135.4C388.6 131.6 395.7 125.6 400.0 122.5C404.3 119.4 404.1 120.2 409.0 116.6C413.9 113.0 423.1 106.1 429.6 101.0C436.1 95.9 441.7 91.2 447.8 86.0C453.9 80.8 460.8 74.5 466.0 69.6C471.2 64.7 475.2 60.2 479.0 56.4C482.8 52.6 487.1 48.6 488.7 47.0L489 748.8Z" fill="none" stroke="#f8ea1c" stroke-width="1.45" stroke-linejoin="round"/><circle cx="186.0" cy="86.2" r="2.3" fill="#f8ea1c"/><circle cx="488.7" cy="47.0" r="2.3" fill="#f8ea1c"/><circle cx="71.7" cy="748.8" r="2.3" fill="#f8ea1c"/><circle cx="489.0" cy="748.8" r="2.3" fill="#f8ea1c"/></g></svg>
</div></div>
<div class="lbl" style="left:4.6px;top:116.7px">351,98</div>
<div class="a" style="left:-1112px;top:-32px;width:3168px;height:819px">
<div class="pside" style="left:1760.0px;top:20.0px;width:330.0px;height:760.0px"></div><div class="a" style="left:1760.0px;top:20.0px;width:2px;height:760.0px;background:#343436"></div><div class="pbody" style="left:1768.0px;top:20.0px;width:322.0px;height:760.0px"></div><div class="pupper" style="left:1768.0px;top:18.0px;width:324.0px;height:150.0px"></div><div class="pgap" style="left:1768.0px;top:168.0px;width:322.0px;height:6.0px"></div><div class="a" style="left:1768.0px;top:194.0px;width:1px;height:586.0px;background:#353536"></div><div class="ptitle" style="left:1768.0px;top:174.0px;width:322.0px;height:20.0px"></div><svg class="a" style="left:1771.0px;top:178.0px" width="9" height="9" viewBox="0 0 9 9"><path d="M0.5 3.2H4.5V0.8L8.5 4.5L4.5 8.2V5.8H0.5Z" fill="#b0b0b0"/></svg><div class="vline" style="left:1784.0px;top:177.0px;height:12px"></div><div class="t tc" style="left:0.0px;top:177.0px;left:1848.0px;width:168px;text-align:center;color:#cfcfcf;letter-spacing:-0.05px">Property Editor</div><svg class="a" style="left:2082.6px;top:177.0px" width="12" height="11" viewBox="0 0 12 11"><path d="M1 3.6H8.6V9.6H1Z" fill="none" stroke="#b4b4b4" stroke-width="1"/><path d="M0.5 3.9H9.1" stroke="#b4b4b4" stroke-width="1.7"/><path d="M6 5.2L10 1.2" stroke="#b4b4b4" stroke-width="1.1"/><path d="M7.4 0.6H10.6V3.8Z" fill="#c4c4c4"/></svg><div class="sl" style="left:1966.0px;top:196.0px;width:100.0px"></div><div class="slf" style="left:1966.0px;top:196.0px;width:29.0px"></div><svg class="a" style="left:1991.5px;top:192.0px" width="7" height="12" viewBox="0 0 7 12"><path d="M3.5 0.3L6.6 3V11.7H0.4V3Z" fill="#d4d4d4" stroke="#8a8a8a" stroke-width=".6"/><path d="M3.3 1.2V11.4" stroke="#f6f6f6" stroke-width="1.6"/></svg><div class="ptitle" style="left:1989.0px;top:174.0px;width:12px;height:20.0px"></div><div class="sep" style="left:1853.0px;top:207.8px;width:219.0px"></div><svg class="a" style="left:1838.5px;top:228.5px" width="6" height="9" viewBox="0 0 6 9"><path d="M0.8 0.5V8.5L5.2 4.5Z" fill="#e8e8e8"/></svg><div class="t" style="left:1852.7px;top:225.7px;;letter-spacing:-0.06px">Friction Coefficient</div><div class="t" style="left:1969.8px;top:215.6px;">3</div><svg class="a" style="left:2050.6px;top:215.6px" width="13" height="13" viewBox="0 0 13 13"><path d="M5.2 11.6L6.3 8.9L9.2 6.3L12 5.2" stroke="#666668" stroke-width="0.9" fill="none"/><path d="M3 8.7L8.6 3.1" stroke="#1c1c1c" stroke-width="2.9" fill="none"/><path d="M11.5 2.6A2.3 2.3 0 1 1 9.4 0.5" stroke="#1c1c1c" stroke-width="1.8" fill="none"/><path d="M0.6 9.4A1.8 1.8 0 1 1 2.4 11.2" stroke="#1c1c1c" stroke-width="1.6" fill="none"/></svg><div class="sl" style="left:1966.0px;top:242.0px;width:100.0px"></div><div class="slf" style="left:1966.0px;top:242.0px;width:8.0px"></div><svg class="a" style="left:1970.5px;top:238.0px" width="7" height="12" viewBox="0 0 7 12"><path d="M3.5 0.3L6.6 3V11.7H0.4V3Z" fill="#d4d4d4" stroke="#8a8a8a" stroke-width=".6"/><path d="M3.3 1.2V11.4" stroke="#f6f6f6" stroke-width="1.6"/></svg><div class="sep" style="left:1853.0px;top:255.0px;width:219.0px"></div><div class="t" style="left:1814.6px;top:263.7px;;letter-spacing:-0.20px">Curved Side Geometry</div><div class="cb" style="left:1975.8px;top:263.9px"></div><div class="t" style="left:1994.0px;top:263.7px;;letter-spacing:0.64px">Off</div><div class="sep" style="left:1815.0px;top:283.4px;width:270.0px"></div><svg class="a" style="left:1779.9px;top:296.4px" width="9" height="6" viewBox="0 0 9 6"><path d="M0.5 0.8H8.5L4.5 5.2Z" fill="#e8e8e8"/></svg><div class="t h" style="left:1795.6px;top:292.0px;;letter-spacing:-0.24px">Simulation Properties</div><div class="sep" style="left:1796.0px;top:311.0px;width:294.0px"></div><div class="t" style="left:1814.6px;top:319.8px;width:139.3px;overflow:hidden;letter-spacing:-0.24px">Particle Distance (mm)</div><div class="t" style="left:1979.0px;top:320.0px;;letter-spacing:-0.00px">20,0</div><svg class="a" style="left:2061.4px;top:320.9px" width="13" height="13" viewBox="0 0 13 13"><path d="M5.2 11.6L6.3 8.9L9.2 6.3L12 5.2" stroke="#666668" stroke-width="0.9" fill="none"/><path d="M3 8.7L8.6 3.1" stroke="#1c1c1c" stroke-width="2.9" fill="none"/><path d="M11.5 2.6A2.3 2.3 0 1 1 9.4 0.5" stroke="#1c1c1c" stroke-width="1.8" fill="none"/><path d="M0.6 9.4A1.8 1.8 0 1 1 2.4 11.2" stroke="#1c1c1c" stroke-width="1.6" fill="none"/></svg><div class="sep" style="left:1815.0px;top:339.3px;width:270.0px"></div><div class="t" style="left:1814.6px;top:347.8px;width:139.3px;overflow:hidden;letter-spacing:-0.18px">Layer</div><div class="t" style="left:1979.0px;top:348.0px;">0</div><svg class="a" style="left:2061.4px;top:348.9px" width="13" height="13" viewBox="0 0 13 13"><path d="M5.2 11.6L6.3 8.9L9.2 6.3L12 5.2" stroke="#666668" stroke-width="0.9" fill="none"/><path d="M3 8.7L8.6 3.1" stroke="#1c1c1c" stroke-width="2.9" fill="none"/><path d="M11.5 2.6A2.3 2.3 0 1 1 9.4 0.5" stroke="#1c1c1c" stroke-width="1.8" fill="none"/><path d="M0.6 9.4A1.8 1.8 0 1 1 2.4 11.2" stroke="#1c1c1c" stroke-width="1.6" fill="none"/></svg><div class="sep" style="left:1815.0px;top:367.3px;width:270.0px"></div><div class="t" style="left:1814.6px;top:375.8px;width:139.3px;overflow:hidden;letter-spacing:0.03px">Shrinkage Weft (%)</div><div class="t" style="left:1979.0px;top:376.0px;;letter-spacing:-0.11px">100,00</div><svg class="a" style="left:2061.4px;top:376.9px" width="13" height="13" viewBox="0 0 13 13"><path d="M5.2 11.6L6.3 8.9L9.2 6.3L12 5.2" stroke="#666668" stroke-width="0.9" fill="none"/><path d="M3 8.7L8.6 3.1" stroke="#1c1c1c" stroke-width="2.9" fill="none"/><path d="M11.5 2.6A2.3 2.3 0 1 1 9.4 0.5" stroke="#1c1c1c" stroke-width="1.8" fill="none"/><path d="M0.6 9.4A1.8 1.8 0 1 1 2.4 11.2" stroke="#1c1c1c" stroke-width="1.6" fill="none"/></svg><div class="sep" style="left:1815.0px;top:395.3px;width:270.0px"></div><div class="t" style="left:1814.6px;top:403.8px;width:139.3px;overflow:hidden;letter-spacing:-0.04px">Shrinkage Warp (%)</div><div class="t" style="left:1979.0px;top:404.0px;;letter-spacing:-0.11px">100,00</div><svg class="a" style="left:2061.4px;top:404.9px" width="13" height="13" viewBox="0 0 13 13"><path d="M5.2 11.6L6.3 8.9L9.2 6.3L12 5.2" stroke="#666668" stroke-width="0.9" fill="none"/><path d="M3 8.7L8.6 3.1" stroke="#1c1c1c" stroke-width="2.9" fill="none"/><path d="M11.5 2.6A2.3 2.3 0 1 1 9.4 0.5" stroke="#1c1c1c" stroke-width="1.8" fill="none"/><path d="M0.6 9.4A1.8 1.8 0 1 1 2.4 11.2" stroke="#1c1c1c" stroke-width="1.6" fill="none"/></svg><div class="sep" style="left:1815.0px;top:423.3px;width:270.0px"></div><div class="t" style="left:1814.6px;top:431.8px;width:139.3px;overflow:hidden;letter-spacing:-0.30px">Add'l Thickness - Collision (m</div><div class="t" style="left:1979.0px;top:432.0px;;letter-spacing:-0.00px">2,50</div><svg class="a" style="left:2061.4px;top:432.9px" width="13" height="13" viewBox="0 0 13 13"><path d="M5.2 11.6L6.3 8.9L9.2 6.3L12 5.2" stroke="#666668" stroke-width="0.9" fill="none"/><path d="M3 8.7L8.6 3.1" stroke="#1c1c1c" stroke-width="2.9" fill="none"/><path d="M11.5 2.6A2.3 2.3 0 1 1 9.4 0.5" stroke="#1c1c1c" stroke-width="1.8" fill="none"/><path d="M0.6 9.4A1.8 1.8 0 1 1 2.4 11.2" stroke="#1c1c1c" stroke-width="1.6" fill="none"/></svg><div class="sep" style="left:1815.0px;top:451.3px;width:270.0px"></div><div class="t" style="left:1814.6px;top:459.8px;width:139.3px;overflow:hidden;letter-spacing:-0.24px">Add'l Thickness - Rendering (m</div><div class="t" style="left:1979.0px;top:460.0px;;letter-spacing:-0.00px">0,00</div><svg class="a" style="left:2061.4px;top:460.9px" width="13" height="13" viewBox="0 0 13 13"><path d="M5.2 11.6L6.3 8.9L9.2 6.3L12 5.2" stroke="#666668" stroke-width="0.9" fill="none"/><path d="M3 8.7L8.6 3.1" stroke="#1c1c1c" stroke-width="2.9" fill="none"/><path d="M11.5 2.6A2.3 2.3 0 1 1 9.4 0.5" stroke="#1c1c1c" stroke-width="1.8" fill="none"/><path d="M0.6 9.4A1.8 1.8 0 1 1 2.4 11.2" stroke="#1c1c1c" stroke-width="1.6" fill="none"/></svg><div class="sep" style="left:1815.0px;top:479.3px;width:270.0px"></div><svg class="a" style="left:1800.5px;top:499.5px" width="6" height="9" viewBox="0 0 6 9"><path d="M0.8 0.5V8.5L5.2 4.5Z" fill="#e8e8e8"/></svg><div class="t" style="left:1814.6px;top:496.6px;;letter-spacing:-0.30px">Pressure</div><div class="t" style="left:1979.0px;top:486.8px;">0</div><svg class="a" style="left:2060.0px;top:486.5px" width="13" height="13" viewBox="0 0 13 13"><path d="M5.2 11.6L6.3 8.9L9.2 6.3L12 5.2" stroke="#666668" stroke-width="0.9" fill="none"/><path d="M3 8.7L8.6 3.1" stroke="#1c1c1c" stroke-width="2.9" fill="none"/><path d="M11.5 2.6A2.3 2.3 0 1 1 9.4 0.5" stroke="#1c1c1c" stroke-width="1.8" fill="none"/><path d="M0.6 9.4A1.8 1.8 0 1 1 2.4 11.2" stroke="#1c1c1c" stroke-width="1.6" fill="none"/></svg><div class="sl" style="left:1976.0px;top:512.8px;width:100.0px"></div><div class="slf" style="left:1976.0px;top:512.8px;width:50.4px"></div><svg class="a" style="left:2022.9px;top:508.8px" width="7" height="12" viewBox="0 0 7 12"><path d="M3.5 0.3L6.6 3V11.7H0.4V3Z" fill="#d4d4d4" stroke="#8a8a8a" stroke-width=".6"/><path d="M3.3 1.2V11.4" stroke="#f6f6f6" stroke-width="1.6"/></svg><div class="sep" style="left:1815.0px;top:526.4px;width:265.0px"></div><svg class="a" style="left:1779.9px;top:539.3px" width="9" height="6" viewBox="0 0 9 6"><path d="M0.5 0.8H8.5L4.5 5.2Z" fill="#e8e8e8"/></svg><div class="t h" style="left:1795.6px;top:534.9px;;letter-spacing:-0.41px">Fabric</div><div class="sep" style="left:1796.0px;top:554.0px;width:294.0px"></div><div class="t" style="left:1814.6px;top:560.0px;;letter-spacing:-0.41px">Fabric</div><div class="dd" style="left:1976.2px;top:557.2px;width:103.4px;height:17.5px"></div><div class="ddb" style="left:2065.1px;top:558.7px;width:14.5px;height:15.5px"></div><svg class="a" style="left:2068.1px;top:564.5px" width="9" height="6" viewBox="0 0 9 6"><path d="M0.5 0.8H8.5L4.5 5.2Z" fill="#1d1d1d"/></svg><div class="sw" style="left:1982.2px;top:563.0px"></div><div class="t" style="left:2003.7px;top:560.2px;color:#d0d0d0;letter-spacing:-0.22px">Default_Fab</div><div class="sep" style="left:1815.0px;top:577.5px;width:267.0px"></div><div class="t" style="left:1814.6px;top:586.0px;;letter-spacing:-0.25px">Grain Direction</div><div class="t" style="left:1979.0px;top:586.3px;;letter-spacing:-0.00px">0,00</div><svg class="a" style="left:2062.3px;top:586.7px" width="13" height="13" viewBox="0 0 13 13"><path d="M5.2 11.6L6.3 8.9L9.2 6.3L12 5.2" stroke="#666668" stroke-width="0.9" fill="none"/><path d="M3 8.7L8.6 3.1" stroke="#1c1c1c" stroke-width="2.9" fill="none"/><path d="M11.5 2.6A2.3 2.3 0 1 1 9.4 0.5" stroke="#1c1c1c" stroke-width="1.8" fill="none"/><path d="M0.6 9.4A1.8 1.8 0 1 1 2.4 11.2" stroke="#1c1c1c" stroke-width="1.6" fill="none"/></svg><div class="sep" style="left:1815.0px;top:605.2px;width:267.0px"></div><svg class="a" style="left:1779.9px;top:618.4px" width="9" height="6" viewBox="0 0 9 6"><path d="M0.5 0.8H8.5L4.5 5.2Z" fill="#e8e8e8"/></svg><div class="t h" style="left:1795.6px;top:614.0px;;letter-spacing:-0.31px">Bond/Skive</div><div class="sep" style="left:1796.0px;top:633.2px;width:294.0px"></div><div class="t" style="left:1814.6px;top:642.0px;;letter-spacing:-0.52px">Bond</div><div class="cb" style="left:1976.1px;top:642.2px"></div><div class="t" style="left:1994.5px;top:642.0px;;letter-spacing:0.64px">Off</div><div class="sep" style="left:1815.0px;top:661.2px;width:267.0px"></div><svg class="a" style="left:1798.9px;top:674.3px" width="9" height="6" viewBox="0 0 9 6"><path d="M0.5 0.8H8.5L4.5 5.2Z" fill="#e8e8e8"/></svg><div class="t" style="left:1814.7px;top:669.9px;;letter-spacing:-0.52px">Skive</div><div class="cb" style="left:1976.1px;top:670.1px"></div><svg class="a" style="left:1976.1px;top:670.1px" width="13" height="13" viewBox="0 0 13 13"><path d="M2.2 6.6L5.3 9.5L10.9 4" stroke="#4eaeee" stroke-width="2.4" fill="none"/></svg><div class="t" style="left:1994.5px;top:669.9px;;letter-spacing:-0.54px">On</div><div class="sep" style="left:1815.0px;top:689.2px;width:267.0px"></div><div class="t" style="left:1833.4px;top:706.8px;;letter-spacing:-0.09px">Percent</div><div class="inp" style="left:1971.0px;top:692.3px"></div><div class="t" style="left:1975.6px;top:697.0px;color:#d8d8d8;letter-spacing:-0.48px">100</div><svg class="a" style="left:2055.0px;top:697.0px" width="13" height="13" viewBox="0 0 13 13"><path d="M5.2 11.6L6.3 8.9L9.2 6.3L12 5.2" stroke="none" stroke-width="0.9" fill="none"/><path d="M3 8.7L8.6 3.1" stroke="#4aa4ee" stroke-width="2.9" fill="none"/><path d="M11.5 2.6A2.3 2.3 0 1 1 9.4 0.5" stroke="#4aa4ee" stroke-width="1.8" fill="none"/><path d="M0.6 9.4A1.8 1.8 0 1 1 2.4 11.2" stroke="#4aa4ee" stroke-width="1.6" fill="none"/></svg><div class="sl" style="left:1971.0px;top:722.7px;width:98.0px"></div><div class="slb" style="left:1971.0px;top:722.7px;width:94.6px"></div><svg class="a" style="left:2062.1px;top:718.7px" width="7" height="12" viewBox="0 0 7 12"><path d="M3.5 0.3L6.6 3V11.7H0.4V3Z" fill="#d4d4d4" stroke="#8a8a8a" stroke-width=".6"/><path d="M3.3 1.2V11.4" stroke="#f6f6f6" stroke-width="1.6"/></svg><div class="sep" style="left:1834.0px;top:736.2px;width:243.0px"></div><svg class="a" style="left:1779.9px;top:749.3px" width="9" height="6" viewBox="0 0 9 6"><path d="M0.5 0.8H8.5L4.5 5.2Z" fill="#e8e8e8"/></svg><div class="t h" style="left:1795.6px;top:744.9px;;letter-spacing:-0.07px">Arrangement</div><div class="sep" style="left:1796.0px;top:764.2px;width:294.0px"></div><div class="dd" style="left:1976.2px;top:769.0px;width:103px;height:18px"></div>
</div>
</div>
<div class="shot" style="left:2084px;top:12px;width:985.5px;height:757.5px;background:#444446">
<div class="a" style="left:-2084px;top:-12px;width:3168px;height:819px">
<div class="a" style="left:2084px;top:12px;width:637px;height:758px;background:#c9c9c9"></div><svg class="a" style="left:0;top:12px" width="2721" height="758"><path d="M2113.2 0V758M2175.7 0V758M2238.2 0V758M2300.7 0V758M2363.2 0V758M2425.7 0V758M2488.2 0V758M2550.7 0V758M2613.2 0V758M2675.7 0V758M2084 49.7H2721M2084 112.2H2721M2084 174.7H2721M2084 237.2H2721M2084 299.7H2721M2084 362.2H2721M2084 424.7H2721M2084 487.2H2721M2084 549.7H2721M2084 612.2H2721M2084 674.7H2721M2084 737.2H2721" stroke="#c1c1c1" stroke-width="1" fill="none"/></svg>
</div>
<div class="a" style="left:0;top:0;width:637px;height:758px;overflow:hidden"><div class="a" style="left:-2084px;top:-12px">
<svg class="fab" width="2722" height="770" viewBox="0 0 2722 770"><defs><clipPath id="c3"><path d="M71.7 748.8C71.8 737.3 72.2 702.5 72.4 680.0C72.7 657.5 72.8 638.2 73.2 614.0C73.6 589.8 74.1 555.7 74.8 535.0C75.5 514.3 76.4 507.2 77.5 490.0C78.6 472.8 80.1 450.5 81.5 431.5C82.9 412.5 84.3 392.9 86.0 376.0C87.7 359.1 89.6 344.8 91.7 330.0C93.8 315.2 96.1 300.8 98.5 287.0C100.9 273.2 103.4 259.3 106.0 247.0C108.6 234.7 111.2 224.0 114.0 213.0C116.8 202.0 120.0 191.0 123.0 181.0C126.0 171.0 129.0 160.8 132.0 153.0C135.0 145.2 137.8 140.0 141.0 134.0C144.2 128.0 147.2 122.8 151.5 117.0C155.8 111.2 161.2 104.6 167.0 99.5C172.8 94.4 182.8 88.4 186.0 86.2C186.8 88.9 188.7 96.9 190.6 102.2C192.5 107.5 194.7 112.7 197.2 117.9C199.7 123.1 202.2 128.2 205.5 133.6C208.8 138.9 211.6 144.6 217.0 150.0C222.4 155.4 231.2 161.9 237.7 165.8C244.2 169.7 250.0 171.6 255.8 173.2C261.6 174.8 268.3 174.9 272.3 175.3C276.3 175.7 276.0 175.8 280.0 175.5C284.0 175.2 290.2 174.6 296.5 173.3C302.8 172.0 311.7 169.7 318.0 167.6C324.3 165.5 329.0 163.3 334.5 161.0C340.0 158.7 345.6 156.1 351.0 153.5C356.4 150.9 361.3 148.3 366.6 145.3C371.9 142.3 377.4 139.2 383.0 135.4C388.6 131.6 395.7 125.6 400.0 122.5C404.3 119.4 404.1 120.2 409.0 116.6C413.9 113.0 423.1 106.1 429.6 101.0C436.1 95.9 441.7 91.2 447.8 86.0C453.9 80.8 460.8 74.5 466.0 69.6C471.2 64.7 475.2 60.2 479.0 56.4C482.8 52.6 487.1 48.6 488.7 47.0L489 748.8Z"/></clipPath></defs><g transform="translate(2026.8 -41.3)"><g clip-path="url(#c3)"><path d="M71.7 748.8C71.8 737.3 72.2 702.5 72.4 680.0C72.7 657.5 72.8 638.2 73.2 614.0C73.6 589.8 74.1 555.7 74.8 535.0C75.5 514.3 76.4 507.2 77.5 490.0C78.6 472.8 80.1 450.5 81.5 431.5C82.9 412.5 84.3 392.9 86.0 376.0C87.7 359.1 89.6 344.8 91.7 330.0C93.8 315.2 96.1 300.8 98.5 287.0C100.9 273.2 103.4 259.3 106.0 247.0C108.6 234.7 111.2 224.0 114.0 213.0C116.8 202.0 120.0 191.0 123.0 181.0C126.0 171.0 129.0 160.8 132.0 153.0C135.0 145.2 137.8 140.0 141.0 134.0C144.2 128.0 147.2 122.8 151.5 117.0C155.8 111.2 161.2 104.6 167.0 99.5C172.8 94.4 182.8 88.4 186.0 86.2C186.8 88.9 188.7 96.9 190.6 102.2C192.5 107.5 194.7 112.7 197.2 117.9C199.7 123.1 202.2 128.2 205.5 133.6C208.8 138.9 211.6 144.6 217.0 150.0C222.4 155.4 231.2 161.9 237.7 165.8C244.2 169.7 250.0 171.6 255.8 173.2C261.6 174.8 268.3 174.9 272.3 175.3C276.3 175.7 276.0 175.8 280.0 175.5C284.0 175.2 290.2 174.6 296.5 173.3C302.8 172.0 311.7 169.7 318.0 167.6C324.3 165.5 329.0 163.3 334.5 161.0C340.0 158.7 345.6 156.1 351.0 153.5C356.4 150.9 361.3 148.3 366.6 145.3C371.9 142.3 377.4 139.2 383.0 135.4C388.6 131.6 395.7 125.6 400.0 122.5C404.3 119.4 404.1 120.2 409.0 116.6C413.9 113.0 423.1 106.1 429.6 101.0C436.1 95.9 441.7 91.2 447.8 86.0C453.9 80.8 460.8 74.5 466.0 69.6C471.2 64.7 475.2 60.2 479.0 56.4C482.8 52.6 487.1 48.6 488.7 47.0L489 748.8Z" fill="#bcbbbb"/><path d="M71.7 748.8C71.8 737.3 72.2 702.5 72.4 680.0C72.7 657.5 72.8 638.2 73.2 614.0C73.6 589.8 74.1 555.7 74.8 535.0C75.5 514.3 76.4 507.2 77.5 490.0C78.6 472.8 80.1 450.5 81.5 431.5C82.9 412.5 84.3 392.9 86.0 376.0C87.7 359.1 89.6 344.8 91.7 330.0C93.8 315.2 96.1 300.8 98.5 287.0C100.9 273.2 103.4 259.3 106.0 247.0C108.6 234.7 111.2 224.0 114.0 213.0C116.8 202.0 120.0 191.0 123.0 181.0C126.0 171.0 129.0 160.8 132.0 153.0C135.0 145.2 137.8 140.0 141.0 134.0C144.2 128.0 147.2 122.8 151.5 117.0C155.8 111.2 161.2 104.6 167.0 99.5C172.8 94.4 182.8 88.4 186.0 86.2C186.8 88.9 188.7 96.9 190.6 102.2C192.5 107.5 194.7 112.7 197.2 117.9C199.7 123.1 202.2 128.2 205.5 133.6C208.8 138.9 211.6 144.6 217.0 150.0C222.4 155.4 231.2 161.9 237.7 165.8C244.2 169.7 250.0 171.6 255.8 173.2C261.6 174.8 268.3 174.9 272.3 175.3C276.3 175.7 276.0 175.8 280.0 175.5C284.0 175.2 290.2 174.6 296.5 173.3C302.8 172.0 311.7 169.7 318.0 167.6C324.3 165.5 329.0 163.3 334.5 161.0C340.0 158.7 345.6 156.1 351.0 153.5C356.4 150.9 361.3 148.3 366.6 145.3C371.9 142.3 377.4 139.2 383.0 135.4C388.6 131.6 395.7 125.6 400.0 122.5C404.3 119.4 404.1 120.2 409.0 116.6C413.9 113.0 423.1 106.1 429.6 101.0C436.1 95.9 441.7 91.2 447.8 86.0C453.9 80.8 460.8 74.5 466.0 69.6C471.2 64.7 475.2 60.2 479.0 56.4C482.8 52.6 487.1 48.6 488.7 47.0L489 748.8Z" fill="none" stroke="#c5a384" stroke-width="24.5" stroke-linejoin="miter"/><path d="M76.4 40V750M92.5 40V750M108.6 40V750M124.7 40V750M140.8 40V750M156.9 40V750M173.0 40V750M189.1 40V750M205.2 40V750M221.3 40V750M237.4 40V750M253.5 40V750M269.6 40V750M285.7 40V750M301.8 40V750M317.9 40V750M334.0 40V750M350.1 40V750M366.2 40V750M382.3 40V750M398.4 40V750M414.5 40V750M430.6 40V750M446.7 40V750M462.8 40V750M478.9 40V750" stroke="#a56e5c" stroke-width="1.15" fill="none"/><path d="M60 37.8H495M60 53.9H495M60 70.0H495M60 86.1H495M60 102.2H495M60 118.3H495M60 134.4H495M60 150.5H495M60 166.6H495M60 182.8H495M60 198.9H495M60 215.0H495M60 231.1H495M60 247.2H495M60 263.3H495M60 279.4H495M60 295.5H495M60 311.6H495M60 327.7H495M60 343.9H495M60 360.0H495M60 376.1H495M60 392.2H495M60 408.3H495M60 424.4H495M60 440.5H495M60 456.6H495M60 472.7H495M60 488.8H495M60 505.0H495M60 521.1H495M60 537.2H495M60 553.3H495M60 569.4H495M60 585.5H495M60 601.6H495M60 617.7H495M60 633.8H495M60 649.9H495M60 666.1H495M60 682.2H495M60 698.3H495M60 714.4H495M60 730.5H495M60 746.6H495" stroke="#5850b2" stroke-width="1.15" fill="none"/></g><path d="M71.7 748.8C71.8 737.3 72.2 702.5 72.4 680.0C72.7 657.5 72.8 638.2 73.2 614.0C73.6 589.8 74.1 555.7 74.8 535.0C75.5 514.3 76.4 507.2 77.5 490.0C78.6 472.8 80.1 450.5 81.5 431.5C82.9 412.5 84.3 392.9 86.0 376.0C87.7 359.1 89.6 344.8 91.7 330.0C93.8 315.2 96.1 300.8 98.5 287.0C100.9 273.2 103.4 259.3 106.0 247.0C108.6 234.7 111.2 224.0 114.0 213.0C116.8 202.0 120.0 191.0 123.0 181.0C126.0 171.0 129.0 160.8 132.0 153.0C135.0 145.2 137.8 140.0 141.0 134.0C144.2 128.0 147.2 122.8 151.5 117.0C155.8 111.2 161.2 104.6 167.0 99.5C172.8 94.4 182.8 88.4 186.0 86.2C186.8 88.9 188.7 96.9 190.6 102.2C192.5 107.5 194.7 112.7 197.2 117.9C199.7 123.1 202.2 128.2 205.5 133.6C208.8 138.9 211.6 144.6 217.0 150.0C222.4 155.4 231.2 161.9 237.7 165.8C244.2 169.7 250.0 171.6 255.8 173.2C261.6 174.8 268.3 174.9 272.3 175.3C276.3 175.7 276.0 175.8 280.0 175.5C284.0 175.2 290.2 174.6 296.5 173.3C302.8 172.0 311.7 169.7 318.0 167.6C324.3 165.5 329.0 163.3 334.5 161.0C340.0 158.7 345.6 156.1 351.0 153.5C356.4 150.9 361.3 148.3 366.6 145.3C371.9 142.3 377.4 139.2 383.0 135.4C388.6 131.6 395.7 125.6 400.0 122.5C404.3 119.4 404.1 120.2 409.0 116.6C413.9 113.0 423.1 106.1 429.6 101.0C436.1 95.9 441.7 91.2 447.8 86.0C453.9 80.8 460.8 74.5 466.0 69.6C471.2 64.7 475.2 60.2 479.0 56.4C482.8 52.6 487.1 48.6 488.7 47.0L489 748.8Z" fill="none" stroke="#f8ea1c" stroke-width="1.45" stroke-linejoin="round"/><circle cx="186.0" cy="86.2" r="2.3" fill="#f8ea1c"/><circle cx="488.7" cy="47.0" r="2.3" fill="#f8ea1c"/><circle cx="71.7" cy="748.8" r="2.3" fill="#f8ea1c"/><circle cx="489.0" cy="748.8" r="2.3" fill="#f8ea1c"/></g></svg>
</div></div>
<div class="a" style="left:-2084px;top:-12px;width:3168px;height:819px">
<div class="pside" style="left:2720.0px;top:6.7px;width:339.0px;height:760.0px"></div><div class="a" style="left:2720.0px;top:6.7px;width:2px;height:760.0px;background:#343436"></div><div class="pbody" style="left:2728.0px;top:6.7px;width:331.0px;height:760.0px"></div><div class="pupper" style="left:2728.0px;top:4.7px;width:333.0px;height:150.0px"></div><div class="pgap" style="left:2728.0px;top:154.7px;width:331.0px;height:6.0px"></div><div class="a" style="left:2728.0px;top:180.7px;width:1px;height:586.0px;background:#353536"></div><div class="ptitle" style="left:2728.0px;top:160.7px;width:331.0px;height:20.0px"></div><svg class="a" style="left:2731.0px;top:164.7px" width="9" height="9" viewBox="0 0 9 9"><path d="M0.5 3.2H4.5V0.8L8.5 4.5L4.5 8.2V5.8H0.5Z" fill="#b0b0b0"/></svg><div class="vline" style="left:2744.0px;top:163.7px;height:12px"></div><div class="t tc" style="left:0.0px;top:163.7px;left:2808.0px;width:168px;text-align:center;color:#cfcfcf;letter-spacing:-0.05px">Property Editor</div><svg class="a" style="left:3042.6px;top:163.7px" width="12" height="11" viewBox="0 0 12 11"><path d="M1 3.6H8.6V9.6H1Z" fill="none" stroke="#b4b4b4" stroke-width="1"/><path d="M0.5 3.9H9.1" stroke="#b4b4b4" stroke-width="1.7"/><path d="M6 5.2L10 1.2" stroke="#b4b4b4" stroke-width="1.1"/><path d="M7.4 0.6H10.6V3.8Z" fill="#c4c4c4"/></svg><div class="sl" style="left:2926.0px;top:182.7px;width:100.0px"></div><div class="slf" style="left:2926.0px;top:182.7px;width:29.0px"></div><svg class="a" style="left:2951.5px;top:178.7px" width="7" height="12" viewBox="0 0 7 12"><path d="M3.5 0.3L6.6 3V11.7H0.4V3Z" fill="#d4d4d4" stroke="#8a8a8a" stroke-width=".6"/><path d="M3.3 1.2V11.4" stroke="#f6f6f6" stroke-width="1.6"/></svg><div class="ptitle" style="left:2949.0px;top:160.7px;width:12px;height:20.0px"></div><div class="sep" style="left:2813.0px;top:194.5px;width:219.0px"></div><svg class="a" style="left:2798.5px;top:215.2px" width="6" height="9" viewBox="0 0 6 9"><path d="M0.8 0.5V8.5L5.2 4.5Z" fill="#e8e8e8"/></svg><div class="t" style="left:2812.7px;top:212.4px;;letter-spacing:-0.06px">Friction Coefficient</div><div class="t" style="left:2929.8px;top:202.3px;">3</div><svg class="a" style="left:3010.6px;top:202.3px" width="13" height="13" viewBox="0 0 13 13"><path d="M5.2 11.6L6.3 8.9L9.2 6.3L12 5.2" stroke="#666668" stroke-width="0.9" fill="none"/><path d="M3 8.7L8.6 3.1" stroke="#1c1c1c" stroke-width="2.9" fill="none"/><path d="M11.5 2.6A2.3 2.3 0 1 1 9.4 0.5" stroke="#1c1c1c" stroke-width="1.8" fill="none"/><path d="M0.6 9.4A1.8 1.8 0 1 1 2.4 11.2" stroke="#1c1c1c" stroke-width="1.6" fill="none"/></svg><div class="sl" style="left:2926.0px;top:228.7px;width:100.0px"></div><div class="slf" style="left:2926.0px;top:228.7px;width:8.0px"></div><svg class="a" style="left:2930.5px;top:224.7px" width="7" height="12" viewBox="0 0 7 12"><path d="M3.5 0.3L6.6 3V11.7H0.4V3Z" fill="#d4d4d4" stroke="#8a8a8a" stroke-width=".6"/><path d="M3.3 1.2V11.4" stroke="#f6f6f6" stroke-width="1.6"/></svg><div class="sep" style="left:2813.0px;top:241.7px;width:219.0px"></div><div class="t" style="left:2774.6px;top:250.4px;;letter-spacing:-0.20px">Curved Side Geometry</div><div class="cb" style="left:2935.8px;top:250.6px"></div><div class="t" style="left:2954.0px;top:250.4px;;letter-spacing:0.64px">Off</div><div class="sep" style="left:2775.0px;top:270.1px;width:270.0px"></div><svg class="a" style="left:2739.9px;top:283.1px" width="9" height="6" viewBox="0 0 9 6"><path d="M0.5 0.8H8.5L4.5 5.2Z" fill="#e8e8e8"/></svg><div class="t h" style="left:2755.6px;top:278.7px;;letter-spacing:-0.24px">Simulation Properties</div><div class="sep" style="left:2756.0px;top:297.7px;width:294.0px"></div><div class="t" style="left:2774.6px;top:306.5px;width:139.3px;overflow:hidden;letter-spacing:-0.24px">Particle Distance (mm)</div><div class="t" style="left:2939.0px;top:306.7px;;letter-spacing:-0.00px">20,0</div><svg class="a" style="left:3021.4px;top:307.6px" width="13" height="13" viewBox="0 0 13 13"><path d="M5.2 11.6L6.3 8.9L9.2 6.3L12 5.2" stroke="#666668" stroke-width="0.9" fill="none"/><path d="M3 8.7L8.6 3.1" stroke="#1c1c1c" stroke-width="2.9" fill="none"/><path d="M11.5 2.6A2.3 2.3 0 1 1 9.4 0.5" stroke="#1c1c1c" stroke-width="1.8" fill="none"/><path d="M0.6 9.4A1.8 1.8 0 1 1 2.4 11.2" stroke="#1c1c1c" stroke-width="1.6" fill="none"/></svg><div class="sep" style="left:2775.0px;top:326.0px;width:270.0px"></div><div class="t" style="left:2774.6px;top:334.5px;width:139.3px;overflow:hidden;letter-spacing:-0.18px">Layer</div><div class="t" style="left:2939.0px;top:334.7px;">0</div><svg class="a" style="left:3021.4px;top:335.6px" width="13" height="13" viewBox="0 0 13 13"><path d="M5.2 11.6L6.3 8.9L9.2 6.3L12 5.2" stroke="#666668" stroke-width="0.9" fill="none"/><path d="M3 8.7L8.6 3.1" stroke="#1c1c1c" stroke-width="2.9" fill="none"/><path d="M11.5 2.6A2.3 2.3 0 1 1 9.4 0.5" stroke="#1c1c1c" stroke-width="1.8" fill="none"/><path d="M0.6 9.4A1.8 1.8 0 1 1 2.4 11.2" stroke="#1c1c1c" stroke-width="1.6" fill="none"/></svg><div class="sep" style="left:2775.0px;top:354.0px;width:270.0px"></div><div class="t" style="left:2774.6px;top:362.5px;width:139.3px;overflow:hidden;letter-spacing:0.03px">Shrinkage Weft (%)</div><div class="t" style="left:2939.0px;top:362.7px;;letter-spacing:-0.11px">100,00</div><svg class="a" style="left:3021.4px;top:363.6px" width="13" height="13" viewBox="0 0 13 13"><path d="M5.2 11.6L6.3 8.9L9.2 6.3L12 5.2" stroke="#666668" stroke-width="0.9" fill="none"/><path d="M3 8.7L8.6 3.1" stroke="#1c1c1c" stroke-width="2.9" fill="none"/><path d="M11.5 2.6A2.3 2.3 0 1 1 9.4 0.5" stroke="#1c1c1c" stroke-width="1.8" fill="none"/><path d="M0.6 9.4A1.8 1.8 0 1 1 2.4 11.2" stroke="#1c1c1c" stroke-width="1.6" fill="none"/></svg><div class="sep" style="left:2775.0px;top:382.0px;width:270.0px"></div><div class="t" style="left:2774.6px;top:390.5px;width:139.3px;overflow:hidden;letter-spacing:-0.04px">Shrinkage Warp (%)</div><div class="t" style="left:2939.0px;top:390.7px;;letter-spacing:-0.11px">100,00</div><svg class="a" style="left:3021.4px;top:391.6px" width="13" height="13" viewBox="0 0 13 13"><path d="M5.2 11.6L6.3 8.9L9.2 6.3L12 5.2" stroke="#666668" stroke-width="0.9" fill="none"/><path d="M3 8.7L8.6 3.1" stroke="#1c1c1c" stroke-width="2.9" fill="none"/><path d="M11.5 2.6A2.3 2.3 0 1 1 9.4 0.5" stroke="#1c1c1c" stroke-width="1.8" fill="none"/><path d="M0.6 9.4A1.8 1.8 0 1 1 2.4 11.2" stroke="#1c1c1c" stroke-width="1.6" fill="none"/></svg><div class="sep" style="left:2775.0px;top:410.0px;width:270.0px"></div><div class="t" style="left:2774.6px;top:418.5px;width:139.3px;overflow:hidden;letter-spacing:-0.30px">Add'l Thickness - Collision (m</div><div class="t" style="left:2939.0px;top:418.7px;;letter-spacing:-0.00px">2,50</div><svg class="a" style="left:3021.4px;top:419.6px" width="13" height="13" viewBox="0 0 13 13"><path d="M5.2 11.6L6.3 8.9L9.2 6.3L12 5.2" stroke="#666668" stroke-width="0.9" fill="none"/><path d="M3 8.7L8.6 3.1" stroke="#1c1c1c" stroke-width="2.9" fill="none"/><path d="M11.5 2.6A2.3 2.3 0 1 1 9.4 0.5" stroke="#1c1c1c" stroke-width="1.8" fill="none"/><path d="M0.6 9.4A1.8 1.8 0 1 1 2.4 11.2" stroke="#1c1c1c" stroke-width="1.6" fill="none"/></svg><div class="sep" style="left:2775.0px;top:438.0px;width:270.0px"></div><div class="t" style="left:2774.6px;top:446.5px;width:139.3px;overflow:hidden;letter-spacing:-0.24px">Add'l Thickness - Rendering (m</div><div class="t" style="left:2939.0px;top:446.7px;;letter-spacing:-0.00px">0,00</div><svg class="a" style="left:3021.4px;top:447.6px" width="13" height="13" viewBox="0 0 13 13"><path d="M5.2 11.6L6.3 8.9L9.2 6.3L12 5.2" stroke="#666668" stroke-width="0.9" fill="none"/><path d="M3 8.7L8.6 3.1" stroke="#1c1c1c" stroke-width="2.9" fill="none"/><path d="M11.5 2.6A2.3 2.3 0 1 1 9.4 0.5" stroke="#1c1c1c" stroke-width="1.8" fill="none"/><path d="M0.6 9.4A1.8 1.8 0 1 1 2.4 11.2" stroke="#1c1c1c" stroke-width="1.6" fill="none"/></svg><div class="sep" style="left:2775.0px;top:466.0px;width:270.0px"></div><svg class="a" style="left:2760.5px;top:486.2px" width="6" height="9" viewBox="0 0 6 9"><path d="M0.8 0.5V8.5L5.2 4.5Z" fill="#e8e8e8"/></svg><div class="t" style="left:2774.6px;top:483.3px;;letter-spacing:-0.30px">Pressure</div><div class="t" style="left:2939.0px;top:473.5px;">0</div><svg class="a" style="left:3020.0px;top:473.2px" width="13" height="13" viewBox="0 0 13 13"><path d="M5.2 11.6L6.3 8.9L9.2 6.3L12 5.2" stroke="#666668" stroke-width="0.9" fill="none"/><path d="M3 8.7L8.6 3.1" stroke="#1c1c1c" stroke-width="2.9" fill="none"/><path d="M11.5 2.6A2.3 2.3 0 1 1 9.4 0.5" stroke="#1c1c1c" stroke-width="1.8" fill="none"/><path d="M0.6 9.4A1.8 1.8 0 1 1 2.4 11.2" stroke="#1c1c1c" stroke-width="1.6" fill="none"/></svg><div class="sl" style="left:2936.0px;top:499.5px;width:100.0px"></div><div class="slf" style="left:2936.0px;top:499.5px;width:50.4px"></div><svg class="a" style="left:2982.9px;top:495.5px" width="7" height="12" viewBox="0 0 7 12"><path d="M3.5 0.3L6.6 3V11.7H0.4V3Z" fill="#d4d4d4" stroke="#8a8a8a" stroke-width=".6"/><path d="M3.3 1.2V11.4" stroke="#f6f6f6" stroke-width="1.6"/></svg><div class="sep" style="left:2775.0px;top:513.1px;width:265.0px"></div><svg class="a" style="left:2739.9px;top:526.0px" width="9" height="6" viewBox="0 0 9 6"><path d="M0.5 0.8H8.5L4.5 5.2Z" fill="#e8e8e8"/></svg><div class="t h" style="left:2755.6px;top:521.6px;;letter-spacing:-0.41px">Fabric</div><div class="sep" style="left:2756.0px;top:540.7px;width:294.0px"></div><div class="t" style="left:2774.6px;top:546.7px;;letter-spacing:-0.41px">Fabric</div><div class="dd" style="left:2936.2px;top:543.9px;width:103.4px;height:17.5px"></div><div class="ddb" style="left:3025.1px;top:545.4px;width:14.5px;height:15.5px"></div><svg class="a" style="left:3028.1px;top:551.2px" width="9" height="6" viewBox="0 0 9 6"><path d="M0.5 0.8H8.5L4.5 5.2Z" fill="#1d1d1d"/></svg><div class="sw" style="left:2942.2px;top:549.7px"></div><div class="t" style="left:2963.7px;top:547.0px;color:#d0d0d0;letter-spacing:-0.22px">Default_Fab</div><div class="sep" style="left:2775.0px;top:564.2px;width:267.0px"></div><div class="t" style="left:2774.6px;top:572.7px;;letter-spacing:-0.25px">Grain Direction</div><div class="t" style="left:2939.0px;top:573.0px;;letter-spacing:-0.00px">0,00</div><svg class="a" style="left:3022.3px;top:573.4px" width="13" height="13" viewBox="0 0 13 13"><path d="M5.2 11.6L6.3 8.9L9.2 6.3L12 5.2" stroke="#666668" stroke-width="0.9" fill="none"/><path d="M3 8.7L8.6 3.1" stroke="#1c1c1c" stroke-width="2.9" fill="none"/><path d="M11.5 2.6A2.3 2.3 0 1 1 9.4 0.5" stroke="#1c1c1c" stroke-width="1.8" fill="none"/><path d="M0.6 9.4A1.8 1.8 0 1 1 2.4 11.2" stroke="#1c1c1c" stroke-width="1.6" fill="none"/></svg><div class="sep" style="left:2775.0px;top:591.9px;width:267.0px"></div><svg class="a" style="left:2739.9px;top:605.1px" width="9" height="6" viewBox="0 0 9 6"><path d="M0.5 0.8H8.5L4.5 5.2Z" fill="#e8e8e8"/></svg><div class="t h" style="left:2755.6px;top:600.7px;;letter-spacing:-0.31px">Bond/Skive</div><div class="sep" style="left:2756.0px;top:619.9px;width:294.0px"></div><div class="t" style="left:2774.6px;top:628.7px;;letter-spacing:-0.52px">Bond</div><div class="cb" style="left:2936.1px;top:628.9px"></div><div class="t" style="left:2954.5px;top:628.7px;;letter-spacing:0.64px">Off</div><div class="sep" style="left:2775.0px;top:647.9px;width:267.0px"></div><svg class="a" style="left:2758.9px;top:661.0px" width="9" height="6" viewBox="0 0 9 6"><path d="M0.5 0.8H8.5L4.5 5.2Z" fill="#e8e8e8"/></svg><div class="t" style="left:2774.7px;top:656.6px;;letter-spacing:-0.52px">Skive</div><div class="cb" style="left:2936.1px;top:656.8px"></div><svg class="a" style="left:2936.1px;top:656.8px" width="13" height="13" viewBox="0 0 13 13"><path d="M2.2 6.6L5.3 9.5L10.9 4" stroke="#4eaeee" stroke-width="2.4" fill="none"/></svg><div class="t" style="left:2954.5px;top:656.6px;;letter-spacing:-0.54px">On</div><div class="sep" style="left:2775.0px;top:675.9px;width:267.0px"></div><div class="t" style="left:2793.4px;top:693.5px;;letter-spacing:-0.09px">Percent</div><div class="inp" style="left:2931.0px;top:679.0px"></div><div class="t" style="left:2935.6px;top:683.7px;color:#d8d8d8">1</div><svg class="a" style="left:3015.0px;top:683.7px" width="13" height="13" viewBox="0 0 13 13"><path d="M5.2 11.6L6.3 8.9L9.2 6.3L12 5.2" stroke="none" stroke-width="0.9" fill="none"/><path d="M3 8.7L8.6 3.1" stroke="#4aa4ee" stroke-width="2.9" fill="none"/><path d="M11.5 2.6A2.3 2.3 0 1 1 9.4 0.5" stroke="#4aa4ee" stroke-width="1.8" fill="none"/><path d="M0.6 9.4A1.8 1.8 0 1 1 2.4 11.2" stroke="#4aa4ee" stroke-width="1.6" fill="none"/></svg><div class="sl" style="left:2931.0px;top:709.2px;width:100.0px"></div><div class="slf" style="left:2931.0px;top:709.2px;width:4.6px"></div><svg class="a" style="left:2932.1px;top:705.2px" width="7" height="12" viewBox="0 0 7 12"><path d="M3.5 0.3L6.6 3V11.7H0.4V3Z" fill="#d4d4d4" stroke="#8a8a8a" stroke-width=".6"/><path d="M3.3 1.2V11.4" stroke="#f6f6f6" stroke-width="1.6"/></svg><div class="sep" style="left:2794.0px;top:722.9px;width:243.0px"></div><svg class="a" style="left:2739.9px;top:736.0px" width="9" height="6" viewBox="0 0 9 6"><path d="M0.5 0.8H8.5L4.5 5.2Z" fill="#e8e8e8"/></svg><div class="t h" style="left:2755.6px;top:731.6px;;letter-spacing:-0.07px">Arrangement</div><div class="sep" style="left:2756.0px;top:750.9px;width:294.0px"></div><div class="dd" style="left:2936.2px;top:755.7px;width:103px;height:18px"></div><div class="pbody" style="left:2729.0px;top:762.7px;width:331px;height:10px"></div><div class="vs" style="left:3046.2px;top:182.7px;width:12.4px;height:580.5px"></div><div class="vst" style="left:3046.2px;top:502.2px;width:12.4px;height:227.5px"></div><div class="vsa" style="left:3046.2px;top:182.7px;width:12.4px;height:12.0px"></div><svg class="a" style="left:3048.4px;top:186.7px" width="8" height="5" viewBox="0 0 8 5"><path d="M0.3 4.3L4 0.6L7.7 4.3Z" fill="#fff"/></svg><div class="vsa" style="left:3046.2px;top:751.2px;width:12.4px;height:12.0px"></div><svg class="a" style="left:3048.4px;top:754.7px" width="8" height="5" viewBox="0 0 8 5"><path d="M0.3 0.7L4 4.4L7.7 0.7Z" fill="#fff"/></svg><div class="grip" style="left:3049.9px;top:614.2px"></div><div class="hs" style="left:2729.5px;top:763.0px;width:316.0px;height:12.0px"></div><div class="hst" style="left:2743.0px;top:763.0px;width:282.0px;height:12.0px"></div><div class="hsa" style="left:2730.0px;top:763.5px;width:12.0px;height:11.0px"></div><svg class="a" style="left:2733.5px;top:765.0px" width="5" height="8" viewBox="0 0 5 8"><path d="M4.5 0L0.5 4L4.5 8Z" fill="#fff"/></svg><div class="hsa" style="left:3033.0px;top:763.5px;width:12.0px;height:11.0px"></div><svg class="a" style="left:3037.0px;top:765.0px" width="5" height="8" viewBox="0 0 5 8"><path d="M0.5 0L4.5 4L0.5 8Z" fill="#fff"/></svg><div class="griph" style="left:2881.0px;top:766.5px"></div><div class="a" style="left:3058.5px;top:6.7px;width:5.5px;height:760px;background:#000"></div><div class="a" style="left:3064.0px;top:6.7px;width:5.5px;height:760px;background:#f0f0f0"></div><div class="a" style="left:3064.5px;top:687.7px;width:3.5px;height:82px;background:#bdbdbd"></div>
</div>
</div>
<svg class="a" style="left:0;top:0" width="3168" height="819" viewBox="0 0 3168 819">
<g fill="none" stroke="#e61c25" stroke-width="2">
<rect x="652" y="305" width="384.8" height="116.9"/>
<rect x="1716.9" y="658.5" width="371.3" height="102.5"/>
<rect x="2721" y="652.9" width="356.3" height="89.1"/>
</g>
<path d="M1586.9 553.7L1905.2 722.6" stroke="#e61c25" stroke-width="2" fill="none"/><path d="M1574.5 547.1L1586.9 561.1L1593.1 549.5ZM1917.6 729.2L1899.0 726.8L1905.2 715.2Z" fill="#e61c25"/>
<path d="M2535.0 598.6L2729.2 686.8" stroke="#e61c25" stroke-width="2" fill="none"/><path d="M2522.3 592.8L2535.5 606.0L2541.0 594.0ZM2741.9 692.6L2723.2 691.4L2728.7 679.4Z" fill="#e61c25"/>
</svg>
</body></html>
